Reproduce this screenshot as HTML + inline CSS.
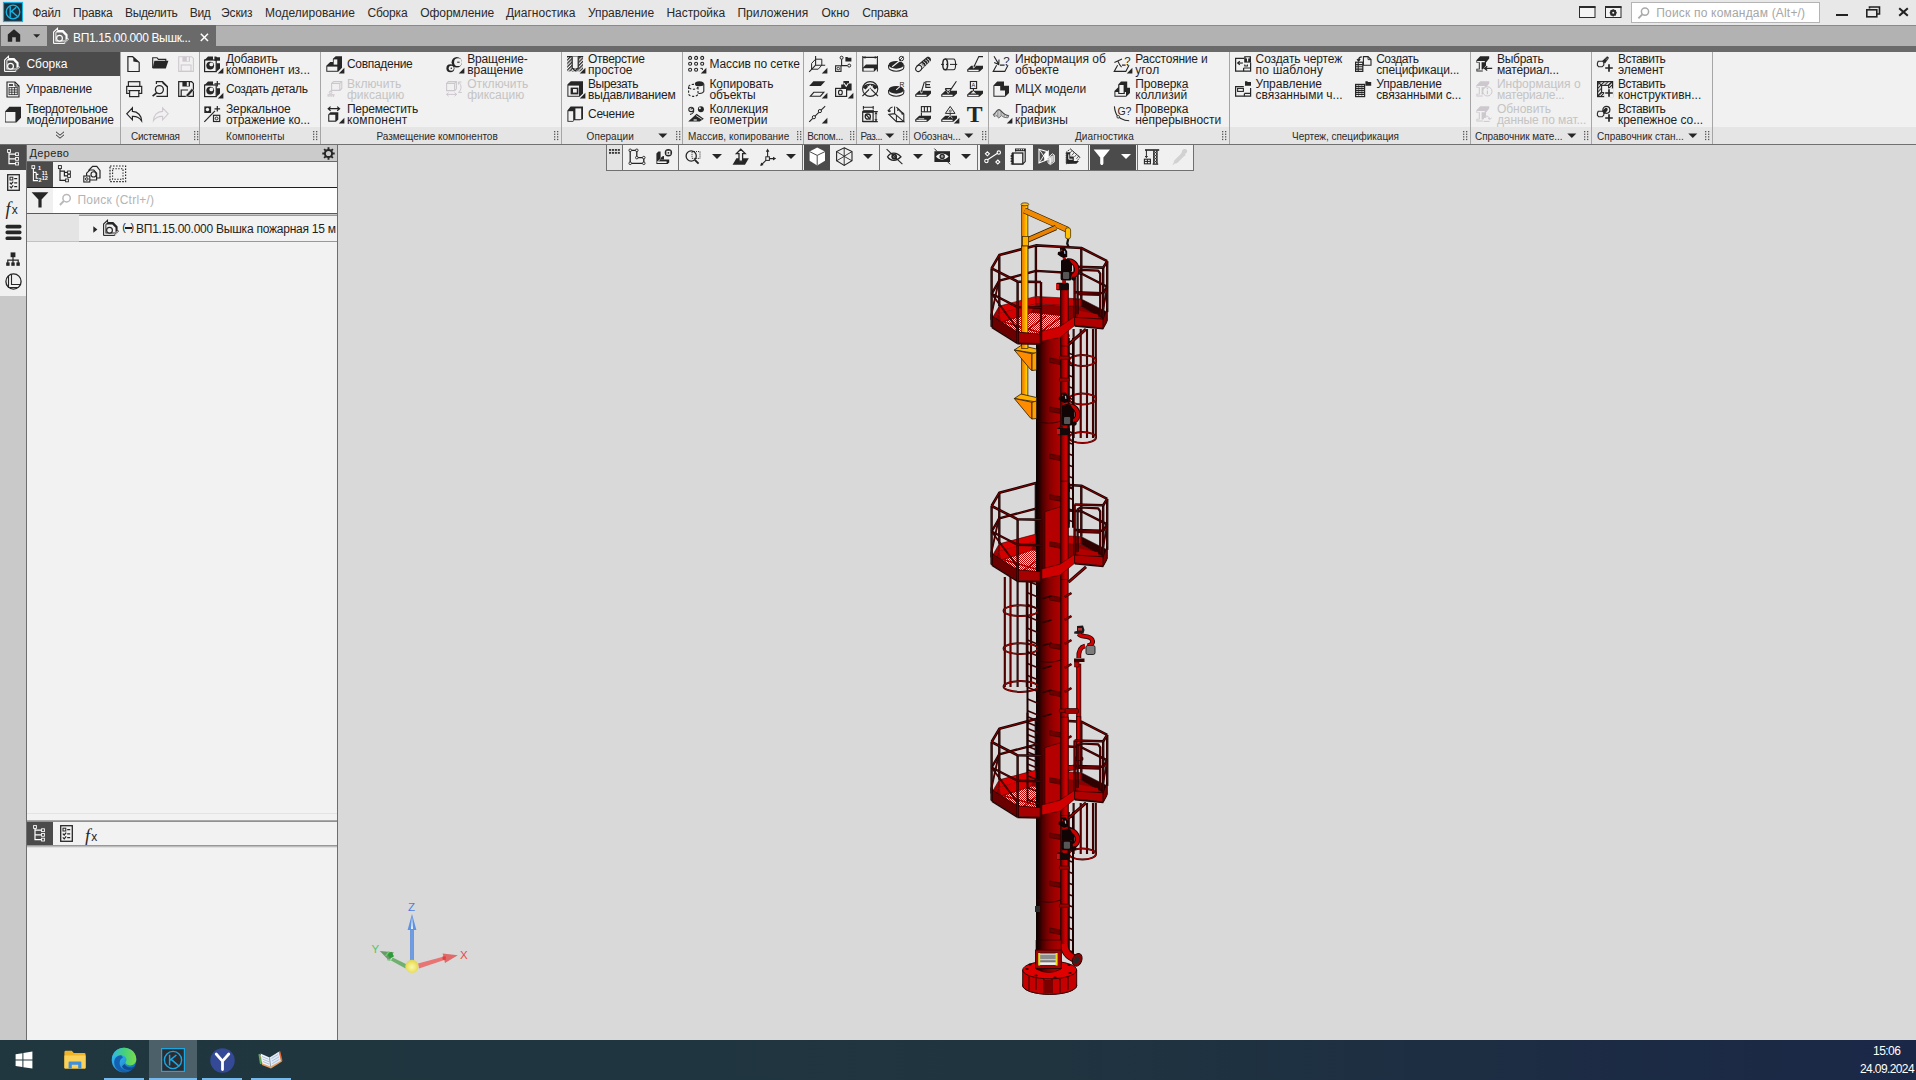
<!DOCTYPE html>
<html lang="ru"><head><meta charset="utf-8"><title>КОМПАС-3D</title><style>
html,body{margin:0;padding:0}
body{width:1916px;height:1080px;position:relative;overflow:hidden;background:#d9d9d9;font-family:"Liberation Sans",sans-serif;font-size:12px;color:#1a1a1a}
body>div,body>span,body>svg{position:absolute;display:block}
.t{white-space:pre}
svg{overflow:visible}
</style></head><body>
<div style="left:0px;top:0px;width:1916px;height:25px;background:#e8e8e8;"></div>
<div style="left:0px;top:25px;width:1916px;height:1px;background:#8a8a8a;"></div>
<svg style="left:3px;top:2px;" width="20" height="20" viewBox="0 0 20 20"><rect x="0" y="0" width="20" height="20" fill="#1d2f3a"/><rect x="0.5" y="0.5" width="19" height="19" fill="none" stroke="#18b4e6" stroke-width="1.2"/>
<circle cx="10" cy="10" r="6.8" fill="none" stroke="#18b4e6" stroke-width="1.3"/>
<path d="M7.2 4.2V15.6M7.4 10.2L13.2 5.2M8.6 9.3L15.4 15.2" fill="none" stroke="#18b4e6" stroke-width="1.4"/></svg>
<span class="t" style="left:32.2px;top:5.84px;font-size:12px;line-height:14px;color:#2a2a2a;letter-spacing:-0.275px;">Файл</span>
<span class="t" style="left:73px;top:5.84px;font-size:12px;line-height:14px;color:#2a2a2a;letter-spacing:-0.172px;">Правка</span>
<span class="t" style="left:125px;top:5.84px;font-size:12px;line-height:14px;color:#2a2a2a;letter-spacing:-0.357px;">Выделить</span>
<span class="t" style="left:189.8px;top:5.84px;font-size:12px;line-height:14px;color:#2a2a2a;letter-spacing:-0.403px;">Вид</span>
<span class="t" style="left:221px;top:5.84px;font-size:12px;line-height:14px;color:#2a2a2a;letter-spacing:-0.116px;">Эскиз</span>
<span class="t" style="left:264.9px;top:5.84px;font-size:12px;line-height:14px;color:#2a2a2a;letter-spacing:0.017px;">Моделирование</span>
<span class="t" style="left:367.4px;top:5.84px;font-size:12px;line-height:14px;color:#2a2a2a;letter-spacing:-0.179px;">Сборка</span>
<span class="t" style="left:420.2px;top:5.84px;font-size:12px;line-height:14px;color:#2a2a2a;letter-spacing:-0.048px;">Оформление</span>
<span class="t" style="left:506px;top:5.84px;font-size:12px;line-height:14px;color:#2a2a2a;letter-spacing:-0.006px;">Диагностика</span>
<span class="t" style="left:588px;top:5.84px;font-size:12px;line-height:14px;color:#2a2a2a;letter-spacing:-0.071px;">Управление</span>
<span class="t" style="left:666.5px;top:5.84px;font-size:12px;line-height:14px;color:#2a2a2a;letter-spacing:-0.064px;">Настройка</span>
<span class="t" style="left:737.4px;top:5.84px;font-size:12px;line-height:14px;color:#2a2a2a;letter-spacing:0.080px;">Приложения</span>
<span class="t" style="left:821.5px;top:5.84px;font-size:12px;line-height:14px;color:#2a2a2a;letter-spacing:0.029px;">Окно</span>
<span class="t" style="left:862.3px;top:5.84px;font-size:12px;line-height:14px;color:#2a2a2a;letter-spacing:-0.225px;">Справка</span>
<svg style="left:1579px;top:6px;" width="17" height="12" viewBox="0 0 17 12"><rect x="0.5" y="1" width="15.5" height="10.5" fill="#f4f4f4" stroke="#2b2b2b" stroke-width="1"/><rect x="0" y="0" width="16.5" height="2" fill="#2b2b2b"/></svg>
<svg style="left:1605px;top:6px;" width="17" height="12" viewBox="0 0 17 12"><rect x="0.5" y="1" width="15.5" height="10.5" fill="#f4f4f4" stroke="#2b2b2b" stroke-width="1"/><rect x="0" y="0" width="16.5" height="2" fill="#2b2b2b"/><circle cx="8.2" cy="6.8" r="2.3" fill="none" stroke="#2b2b2b" stroke-width="1.8"/><path d="M8.2 3.2v7.2M4.6 6.8h7.2M5.7 4.3l5 5M10.7 4.3l-5 5" stroke="#2b2b2b" stroke-width="1.1"/><circle cx="8.2" cy="6.8" r="1" fill="#f4f4f4"/></svg>
<div style="left:1631px;top:2px;width:189px;height:21px;background:#ffffff;border:1px solid #b4b4b4;box-sizing:border-box;"></div>
<svg style="left:1637px;top:6px;" width="14" height="14" viewBox="0 0 14 14"><circle cx="8" cy="5.6" r="3.6" fill="none" stroke="#a9a9a9" stroke-width="1.5"/><path d="M5.3 8.4L1.4 12.4" stroke="#a9a9a9" stroke-width="1.9"/></svg>
<span class="t" style="left:1656.3px;top:6.04px;font-size:12px;line-height:14px;color:#a6a6a6;letter-spacing:0.188px;">Поиск по командам (Alt+/)</span>
<div style="left:1836px;top:14px;width:12px;height:2px;background:#222;"></div>
<svg style="left:1866px;top:6px;" width="14" height="12" viewBox="0 0 14 12"><path d="M3.5 2.5V1h10v7h-2.5" fill="none" stroke="#222" stroke-width="1.6"/><rect x="0.8" y="3.8" width="10" height="7" fill="none" stroke="#222" stroke-width="1.6"/></svg>
<svg style="left:1898px;top:7px;" width="12" height="10" viewBox="0 0 12 10"><path d="M1.2 1.2L9.8 8.8M9.8 1.2L1.2 8.8" stroke="#222" stroke-width="2.1"/></svg>
<div style="left:0px;top:26px;width:1916px;height:20px;background:#b2b2b2;"></div>
<div style="left:0px;top:46px;width:1916px;height:6px;background:#6a6a6a;"></div>
<div style="left:0px;top:25px;width:216px;height:27px;background:#6a6a6a;"></div>
<div style="left:1px;top:26px;width:46px;height:20px;background:#b2b2b2;"></div>
<svg style="left:7px;top:29px;" width="14" height="13" viewBox="0 0 14 13"><path d="M7 0.200L0.800 5.400V12.800H5.200V8.200H8.800V12.800H13.200V5.400z" fill="#262626"/></svg>
<svg style="left:33px;top:33.6px;" width="8" height="4" viewBox="0 0 8 4"><path d="M0.2 0.2h7l-3.500 3.500z" fill="#262626"/></svg>
<svg style="left:53px;top:28px;" width="17" height="17" viewBox="0 0 17 17"><path d="M0.600 15.500V4.100L4.500 0.400V2.200" fill="none" stroke="#ffffff" stroke-width="1.100"/><path d="M0.600 15.400H11.600" stroke="#ffffff" stroke-width="1.100"/><path d="M11.400 15.400L15.800 10.400" stroke="#ffffff" stroke-width="1.200" stroke-dasharray="1 0.700"/>
<path d="M2.400 13.600V4.600L4.800 2.100H10.300L14.600 6.400V9.900L16 10.500L14.300 10.800L11.700 13.600z" fill="#ffffff"/><path d="M3.400 4.600H9.300L12.500 7.800V12.600H3.400z" fill="#6a6a6a"/>
<circle cx="6.500" cy="10.200" r="2.900" fill="#6a6a6a" stroke="#ffffff" stroke-width="1.200"/></svg>
<span class="t" style="left:73px;top:30.84px;font-size:12px;line-height:14px;color:#ffffff;letter-spacing:-0.350px;">ВП1.15.00.000 Вышк...</span>
<svg style="left:200px;top:33px;" width="9" height="9" viewBox="0 0 9 9"><path d="M0.8 0.8L8 8M8 0.8L0.8 8" stroke="#fff" stroke-width="1.5"/></svg>
<div style="left:0px;top:52px;width:1916px;height:75px;background:#f1f1f1;"></div>
<div style="left:0px;top:127px;width:1916px;height:17px;background:#e5e5e5;"></div>
<div style="left:0px;top:144px;width:1916px;height:1px;background:#707070;"></div>
<div style="left:0px;top:52px;width:120px;height:24.4px;background:#4b4b4b;"></div>
<svg style="left:4px;top:56px;" width="17" height="17" viewBox="0 0 17 17"><path d="M0.600 15.500V4.100L4.500 0.400V2.200" fill="none" stroke="#ffffff" stroke-width="1.100"/><path d="M0.600 15.400H11.600" stroke="#ffffff" stroke-width="1.100"/><path d="M11.400 15.400L15.800 10.400" stroke="#ffffff" stroke-width="1.200" stroke-dasharray="1 0.700"/>
<path d="M2.400 13.600V4.600L4.800 2.100H10.300L14.600 6.400V9.900L16 10.500L14.300 10.800L11.700 13.600z" fill="#ffffff"/><path d="M3.400 4.600H9.300L12.500 7.800V12.600H3.400z" fill="#4b4b4b"/>
<circle cx="6.500" cy="10.200" r="2.900" fill="#4b4b4b" stroke="#ffffff" stroke-width="1.200"/></svg>
<span class="t" style="left:26.4px;top:57.14px;font-size:12px;line-height:14px;color:#ffffff;letter-spacing:-0.012px;">Сборка</span>
<svg style="left:6px;top:80.5px;" width="14" height="17" viewBox="0 0 14 17"><path d="M1 1h8l4 4v11H1z" fill="#f1f1f1" stroke="#262626" stroke-width="1.100"/><path d="M9 1v4h4" fill="none" stroke="#262626" stroke-width="1"/>
<path d="M3 4h4" stroke="#262626" stroke-width="1.6"/><path d="M3 6.6h8.4M3 8.9h8.4M3 11.2h8.4M3 13.6h8.4M3 6.2v7.8M5.8 6.2v7.8M8.6 6.2v7.8M11.3 6.2v7.8" stroke="#262626" stroke-width="0.800"/></svg>
<span class="t" style="left:26px;top:82.14px;font-size:12px;line-height:14px;color:#1e1e1e;letter-spacing:-0.051px;">Управление</span>
<svg style="left:4px;top:105.5px;" width="18" height="17" viewBox="0 0 18 17"><path d="M1 5.4L5.4 0.8h11.6v11L12.4 16.4H1z" fill="#262626"/><rect x="1.6" y="6" width="9.8" height="9.6" fill="#f1f1f1"/></svg>
<span class="t" style="left:26px;top:102.14px;font-size:12px;line-height:14px;color:#1e1e1e;letter-spacing:-0.199px;">Твердотельное</span>
<span class="t" style="left:26.5px;top:113.14px;font-size:12px;line-height:14px;color:#1e1e1e;letter-spacing:-0.031px;">моделирование</span>
<svg style="left:55px;top:131px;" width="10" height="8" viewBox="0 0 10 8"><path d="M1 0.8L5 4.2L9 0.8M1 3.8L5 7.2L9 3.8" fill="none" stroke="#333" stroke-width="1"/></svg>
<div style="left:120px;top:52px;width:1px;height:92px;background:#a6a6a6;"></div>
<div style="left:199px;top:52px;width:1px;height:92px;background:#a6a6a6;"></div>
<div style="left:320px;top:52px;width:1px;height:92px;background:#a6a6a6;"></div>
<div style="left:561px;top:52px;width:1px;height:92px;background:#a6a6a6;"></div>
<div style="left:682px;top:52px;width:1px;height:92px;background:#a6a6a6;"></div>
<div style="left:803px;top:52px;width:1px;height:92px;background:#a6a6a6;"></div>
<div style="left:856px;top:52px;width:1px;height:92px;background:#a6a6a6;"></div>
<div style="left:909px;top:52px;width:1px;height:92px;background:#a6a6a6;"></div>
<div style="left:988px;top:52px;width:1px;height:92px;background:#a6a6a6;"></div>
<div style="left:1229px;top:52px;width:1px;height:92px;background:#a6a6a6;"></div>
<div style="left:1470px;top:52px;width:1px;height:92px;background:#a6a6a6;"></div>
<div style="left:1591px;top:52px;width:1px;height:92px;background:#a6a6a6;"></div>
<div style="left:1712px;top:52px;width:1px;height:92px;background:#a6a6a6;"></div>
<span class="t" style="left:131px;top:130.84px;font-size:10px;line-height:12px;color:#2a2a2a;letter-spacing:-0.279px;">Системная</span>
<svg style="left:194px;top:131px;" width="5" height="10" viewBox="0 0 5 10"><rect x="0" y="0" width="1.3" height="1.3" fill="#555"/><rect x="0" y="2.6" width="1.3" height="1.3" fill="#555"/><rect x="0" y="5.2" width="1.3" height="1.3" fill="#555"/><rect x="0" y="7.8" width="1.3" height="1.3" fill="#555"/><rect x="3" y="0" width="1.3" height="1.3" fill="#555"/><rect x="3" y="2.6" width="1.3" height="1.3" fill="#555"/><rect x="3" y="5.2" width="1.3" height="1.3" fill="#555"/><rect x="3" y="7.8" width="1.3" height="1.3" fill="#555"/></svg>
<span class="t" style="left:226px;top:130.84px;font-size:10px;line-height:12px;color:#2a2a2a;letter-spacing:0.079px;">Компоненты</span>
<svg style="left:313px;top:131px;" width="5" height="10" viewBox="0 0 5 10"><rect x="0" y="0" width="1.3" height="1.3" fill="#555"/><rect x="0" y="2.6" width="1.3" height="1.3" fill="#555"/><rect x="0" y="5.2" width="1.3" height="1.3" fill="#555"/><rect x="0" y="7.8" width="1.3" height="1.3" fill="#555"/><rect x="3" y="0" width="1.3" height="1.3" fill="#555"/><rect x="3" y="2.6" width="1.3" height="1.3" fill="#555"/><rect x="3" y="5.2" width="1.3" height="1.3" fill="#555"/><rect x="3" y="7.8" width="1.3" height="1.3" fill="#555"/></svg>
<span class="t" style="left:376.4px;top:130.84px;font-size:10px;line-height:12px;color:#2a2a2a;letter-spacing:-0.022px;">Размещение компонентов</span>
<svg style="left:554px;top:131px;" width="5" height="10" viewBox="0 0 5 10"><rect x="0" y="0" width="1.3" height="1.3" fill="#555"/><rect x="0" y="2.6" width="1.3" height="1.3" fill="#555"/><rect x="0" y="5.2" width="1.3" height="1.3" fill="#555"/><rect x="0" y="7.8" width="1.3" height="1.3" fill="#555"/><rect x="3" y="0" width="1.3" height="1.3" fill="#555"/><rect x="3" y="2.6" width="1.3" height="1.3" fill="#555"/><rect x="3" y="5.2" width="1.3" height="1.3" fill="#555"/><rect x="3" y="7.8" width="1.3" height="1.3" fill="#555"/></svg>
<span class="t" style="left:586.6px;top:130.84px;font-size:10px;line-height:12px;color:#2a2a2a;letter-spacing:0.053px;">Операции</span>
<svg style="left:675.5px;top:131px;" width="5" height="10" viewBox="0 0 5 10"><rect x="0" y="0" width="1.3" height="1.3" fill="#555"/><rect x="0" y="2.6" width="1.3" height="1.3" fill="#555"/><rect x="0" y="5.2" width="1.3" height="1.3" fill="#555"/><rect x="0" y="7.8" width="1.3" height="1.3" fill="#555"/><rect x="3" y="0" width="1.3" height="1.3" fill="#555"/><rect x="3" y="2.6" width="1.3" height="1.3" fill="#555"/><rect x="3" y="5.2" width="1.3" height="1.3" fill="#555"/><rect x="3" y="7.8" width="1.3" height="1.3" fill="#555"/></svg>
<span class="t" style="left:688px;top:130.84px;font-size:10px;line-height:12px;color:#2a2a2a;letter-spacing:0.071px;">Массив, копирование</span>
<svg style="left:796.5px;top:131px;" width="5" height="10" viewBox="0 0 5 10"><rect x="0" y="0" width="1.3" height="1.3" fill="#555"/><rect x="0" y="2.6" width="1.3" height="1.3" fill="#555"/><rect x="0" y="5.2" width="1.3" height="1.3" fill="#555"/><rect x="0" y="7.8" width="1.3" height="1.3" fill="#555"/><rect x="3" y="0" width="1.3" height="1.3" fill="#555"/><rect x="3" y="2.6" width="1.3" height="1.3" fill="#555"/><rect x="3" y="5.2" width="1.3" height="1.3" fill="#555"/><rect x="3" y="7.8" width="1.3" height="1.3" fill="#555"/></svg>
<span class="t" style="left:807.2px;top:130.84px;font-size:10px;line-height:12px;color:#2a2a2a;letter-spacing:-0.257px;">Вспом...</span>
<svg style="left:849.5px;top:131px;" width="5" height="10" viewBox="0 0 5 10"><rect x="0" y="0" width="1.3" height="1.3" fill="#555"/><rect x="0" y="2.6" width="1.3" height="1.3" fill="#555"/><rect x="0" y="5.2" width="1.3" height="1.3" fill="#555"/><rect x="0" y="7.8" width="1.3" height="1.3" fill="#555"/><rect x="3" y="0" width="1.3" height="1.3" fill="#555"/><rect x="3" y="2.6" width="1.3" height="1.3" fill="#555"/><rect x="3" y="5.2" width="1.3" height="1.3" fill="#555"/><rect x="3" y="7.8" width="1.3" height="1.3" fill="#555"/></svg>
<span class="t" style="left:860.6px;top:130.84px;font-size:10px;line-height:12px;color:#2a2a2a;letter-spacing:-0.568px;">Раз...</span>
<svg style="left:903px;top:131px;" width="5" height="10" viewBox="0 0 5 10"><rect x="0" y="0" width="1.3" height="1.3" fill="#555"/><rect x="0" y="2.6" width="1.3" height="1.3" fill="#555"/><rect x="0" y="5.2" width="1.3" height="1.3" fill="#555"/><rect x="0" y="7.8" width="1.3" height="1.3" fill="#555"/><rect x="3" y="0" width="1.3" height="1.3" fill="#555"/><rect x="3" y="2.6" width="1.3" height="1.3" fill="#555"/><rect x="3" y="5.2" width="1.3" height="1.3" fill="#555"/><rect x="3" y="7.8" width="1.3" height="1.3" fill="#555"/></svg>
<span class="t" style="left:913.5px;top:130.84px;font-size:10px;line-height:12px;color:#2a2a2a;letter-spacing:-0.085px;">Обознач...</span>
<svg style="left:981.5px;top:131px;" width="5" height="10" viewBox="0 0 5 10"><rect x="0" y="0" width="1.3" height="1.3" fill="#555"/><rect x="0" y="2.6" width="1.3" height="1.3" fill="#555"/><rect x="0" y="5.2" width="1.3" height="1.3" fill="#555"/><rect x="0" y="7.8" width="1.3" height="1.3" fill="#555"/><rect x="3" y="0" width="1.3" height="1.3" fill="#555"/><rect x="3" y="2.6" width="1.3" height="1.3" fill="#555"/><rect x="3" y="5.2" width="1.3" height="1.3" fill="#555"/><rect x="3" y="7.8" width="1.3" height="1.3" fill="#555"/></svg>
<span class="t" style="left:1075px;top:130.84px;font-size:10px;line-height:12px;color:#2a2a2a;letter-spacing:0.075px;">Диагностика</span>
<svg style="left:1222px;top:131px;" width="5" height="10" viewBox="0 0 5 10"><rect x="0" y="0" width="1.3" height="1.3" fill="#555"/><rect x="0" y="2.6" width="1.3" height="1.3" fill="#555"/><rect x="0" y="5.2" width="1.3" height="1.3" fill="#555"/><rect x="0" y="7.8" width="1.3" height="1.3" fill="#555"/><rect x="3" y="0" width="1.3" height="1.3" fill="#555"/><rect x="3" y="2.6" width="1.3" height="1.3" fill="#555"/><rect x="3" y="5.2" width="1.3" height="1.3" fill="#555"/><rect x="3" y="7.8" width="1.3" height="1.3" fill="#555"/></svg>
<span class="t" style="left:1292px;top:130.84px;font-size:10px;line-height:12px;color:#2a2a2a;letter-spacing:-0.036px;">Чертеж, спецификация</span>
<svg style="left:1463px;top:131px;" width="5" height="10" viewBox="0 0 5 10"><rect x="0" y="0" width="1.3" height="1.3" fill="#555"/><rect x="0" y="2.6" width="1.3" height="1.3" fill="#555"/><rect x="0" y="5.2" width="1.3" height="1.3" fill="#555"/><rect x="0" y="7.8" width="1.3" height="1.3" fill="#555"/><rect x="3" y="0" width="1.3" height="1.3" fill="#555"/><rect x="3" y="2.6" width="1.3" height="1.3" fill="#555"/><rect x="3" y="5.2" width="1.3" height="1.3" fill="#555"/><rect x="3" y="7.8" width="1.3" height="1.3" fill="#555"/></svg>
<span class="t" style="left:1475px;top:130.84px;font-size:10px;line-height:12px;color:#2a2a2a;letter-spacing:-0.047px;">Справочник мате...</span>
<svg style="left:1584px;top:131px;" width="5" height="10" viewBox="0 0 5 10"><rect x="0" y="0" width="1.3" height="1.3" fill="#555"/><rect x="0" y="2.6" width="1.3" height="1.3" fill="#555"/><rect x="0" y="5.2" width="1.3" height="1.3" fill="#555"/><rect x="0" y="7.8" width="1.3" height="1.3" fill="#555"/><rect x="3" y="0" width="1.3" height="1.3" fill="#555"/><rect x="3" y="2.6" width="1.3" height="1.3" fill="#555"/><rect x="3" y="5.2" width="1.3" height="1.3" fill="#555"/><rect x="3" y="7.8" width="1.3" height="1.3" fill="#555"/></svg>
<span class="t" style="left:1597px;top:130.84px;font-size:10px;line-height:12px;color:#2a2a2a;letter-spacing:0.014px;">Справочник стан...</span>
<svg style="left:1705px;top:131px;" width="5" height="10" viewBox="0 0 5 10"><rect x="0" y="0" width="1.3" height="1.3" fill="#555"/><rect x="0" y="2.6" width="1.3" height="1.3" fill="#555"/><rect x="0" y="5.2" width="1.3" height="1.3" fill="#555"/><rect x="0" y="7.8" width="1.3" height="1.3" fill="#555"/><rect x="3" y="0" width="1.3" height="1.3" fill="#555"/><rect x="3" y="2.6" width="1.3" height="1.3" fill="#555"/><rect x="3" y="5.2" width="1.3" height="1.3" fill="#555"/><rect x="3" y="7.8" width="1.3" height="1.3" fill="#555"/></svg>
<svg style="left:658px;top:133px;" width="10" height="6" viewBox="0 0 10 6"><path d="M0.3 0.5h9l-4.5 4.6z" fill="#262626"/></svg>
<svg style="left:885px;top:133px;" width="10" height="6" viewBox="0 0 10 6"><path d="M0.3 0.5h9l-4.5 4.6z" fill="#262626"/></svg>
<svg style="left:963.8px;top:133px;" width="10" height="6" viewBox="0 0 10 6"><path d="M0.3 0.5h9l-4.5 4.6z" fill="#262626"/></svg>
<svg style="left:1566.6px;top:133px;" width="10" height="6" viewBox="0 0 10 6"><path d="M0.3 0.5h9l-4.5 4.6z" fill="#262626"/></svg>
<svg style="left:1688px;top:133px;" width="10" height="6" viewBox="0 0 10 6"><path d="M0.3 0.5h9l-4.5 4.6z" fill="#262626"/></svg>
<svg style="left:126.3px;top:56.2px;" width="16" height="17" viewBox="0 0 16 17"><path d="M1.900 0.700H6.600L13.200 6.400V15.500H1.900z" fill="#f1f1f1" stroke="#262626" stroke-width="1.200" stroke-linejoin="miter"/><path d="M7.300 0.700V5.600L13.200 6.400z" fill="#262626"/></svg>
<svg style="left:152px;top:56.2px;" width="17" height="17" viewBox="0 0 17 17"><path d="M0.700 12V1.700H5L6.400 3.400H13.800V5.200" fill="none" stroke="#262626" stroke-width="1.100"/><path d="M0.600 12.400L2.400 4.800H16.400L13.800 12.400z" fill="#262626"/></svg>
<svg style="left:178px;top:56.2px;" width="16" height="17" viewBox="0 0 16 17"><path d="M0.700 0.700H13.600L15.400 2.400V15.400H0.700z" fill="none" stroke="#cfc9cf" stroke-width="1.100"/><rect x="4.400" y="0.700" width="7.600" height="5" fill="#cfc9cf"/><rect x="8.800" y="1.200" width="2" height="4" fill="#f1f1f1"/><rect x="3.200" y="9" width="9.800" height="6.400" fill="none" stroke="#cfc9cf" stroke-width="1.100"/></svg>
<svg style="left:126.3px;top:81.2px;" width="17" height="17" viewBox="0 0 17 17"><rect x="2.400" y="0.700" width="11.400" height="5" fill="#f1f1f1" stroke="#262626" stroke-width="1.200"/><rect x="0.700" y="5.400" width="15" height="7" fill="#f1f1f1" stroke="#262626" stroke-width="1.200"/><path d="M2.400 9.600H14" stroke="#262626" stroke-width="1.200"/><rect x="3.600" y="9.600" width="9.200" height="6" fill="#f1f1f1" stroke="#262626" stroke-width="1.200"/></svg>
<svg style="left:152px;top:81.2px;" width="17" height="17" viewBox="0 0 17 17"><path d="M4.400 15.400H15.400V5.600L10.600 0.700H4.400V3" fill="none" stroke="#262626" stroke-width="1.200"/><path d="M10.600 0.700L15.400 5.600V6.800L10 2z" fill="#262626"/><circle cx="7.400" cy="8.600" r="4" fill="#f1f1f1" stroke="#262626" stroke-width="1.300"/><path d="M4.600 11.800L0.600 15.200" stroke="#262626" stroke-width="1.700"/></svg>
<svg style="left:178px;top:81.2px;" width="17" height="17" viewBox="0 0 17 17"><path d="M0.700 0.700H13.600L15.400 2.400V15.400H0.700z" fill="#f1f1f1" stroke="#262626" stroke-width="1.200"/><rect x="4.400" y="0.700" width="7.600" height="4.800" fill="#262626"/><rect x="8.800" y="1.100" width="1.900" height="3.800" fill="#f1f1f1"/><path d="M3.200 15.400V9H10" fill="none" stroke="#262626" stroke-width="1.200"/><path d="M8.400 13.600L13.800 7.400L15.800 9.200L10.400 15.200L8 15.800z" fill="#262626" stroke="#f1f1f1" stroke-width="0.500"/></svg>
<svg style="left:126.3px;top:107.0px;" width="17" height="15" viewBox="0 0 17 15"><path d="M6.400 0.800L0.800 6.800L6.400 12.800V9.400C10.400 9.200 13.400 10.400 15.600 13.800C15.400 8.600 12 4.600 6.400 4.400z" fill="#f1f1f1" stroke="#262626" stroke-width="1.200" stroke-linejoin="miter"/></svg>
<svg style="left:152px;top:107.0px;" width="17" height="15" viewBox="0 0 17 15"><path d="M10.600 0.800L16.200 6.800L10.600 12.800V9.400C6.600 9.200 3.600 10.400 1.400 13.800C1.600 8.600 5 4.600 10.600 4.400z" fill="#f1f1f1" stroke="#cfc9cf" stroke-width="1.100" stroke-linejoin="miter"/></svg>
<svg style="left:204.4px;top:56.2px;" width="17" height="17" viewBox="0 0 17 17"><path d="M0.600 4L4 0.400H9V4z" fill="#262626"/><path d="M12.200 7.300H16V12.400L12.200 16z" fill="#262626"/><rect x="0.600" y="4" width="11.600" height="11.600" fill="#f1f1f1" stroke="#262626" stroke-width="1.200"/><circle cx="6.200" cy="9.600" r="3.900" fill="#262626"/><circle cx="7.300" cy="8.400" r="1.900" fill="#f1f1f1"/><path d="M10.400 0.400h1.800l0.800 0.800h3v3.600H10.400z" fill="#262626"/></svg>
<svg style="left:216.7px;top:66.7px" width="7" height="7" viewBox="0 0 7 7"><path d="M7 -1V7H-1z" fill="#f1f1f1"/><path d="M6.400 0.800V6.400H0.800z" fill="#262626"/></svg>
<span class="t" style="left:226px;top:52.14px;font-size:12px;line-height:14px;color:#1e1e1e;letter-spacing:-0.191px;">Добавить</span>
<span class="t" style="left:226px;top:63.14px;font-size:12px;line-height:14px;color:#1e1e1e;letter-spacing:-0.029px;">компонент из...</span>
<svg style="left:204.4px;top:81.2px;" width="17" height="17" viewBox="0 0 17 17"><path d="M0.600 4L4 0.400H9V4z" fill="#262626"/><path d="M12.200 7.300H16V12.400L12.200 16z" fill="#262626"/><rect x="0.600" y="4" width="11.600" height="11.600" fill="#f1f1f1" stroke="#262626" stroke-width="1.200"/><circle cx="6.200" cy="9.600" r="3.900" fill="#262626"/><circle cx="7.300" cy="8.400" r="1.900" fill="#f1f1f1"/><path d="M13.300 0v5.600M10.500 2.800h5.600" stroke="#262626" stroke-width="1.200"/></svg>
<svg style="left:216.7px;top:91.7px" width="7" height="7" viewBox="0 0 7 7"><path d="M7 -1V7H-1z" fill="#f1f1f1"/><path d="M6.400 0.800V6.400H0.800z" fill="#262626"/></svg>
<span class="t" style="left:226px;top:82.14px;font-size:12px;line-height:14px;color:#1e1e1e;letter-spacing:-0.428px;">Создать деталь</span>
<svg style="left:204.4px;top:106.2px;" width="17" height="17" viewBox="0 0 17 17"><rect x="0.300" y="0.400" width="6.800" height="6.600" fill="#262626"/><circle cx="3.500" cy="3.500" r="1.700" fill="#f1f1f1"/><path d="M0.300 15.800L11 4.800" stroke="#262626" stroke-width="1.200"/><path d="M13.300 0v5.600M10.500 2.800h5.600" stroke="#262626" stroke-width="1.200"/><rect x="9.500" y="9.300" width="6.200" height="6.200" fill="#f1f1f1" stroke="#262626" stroke-width="1.200"/><circle cx="12.600" cy="12.400" r="1.400" fill="none" stroke="#262626" stroke-width="1"/></svg>
<span class="t" style="left:226px;top:102.14px;font-size:12px;line-height:14px;color:#1e1e1e;letter-spacing:-0.141px;">Зеркальное</span>
<span class="t" style="left:226px;top:113.14px;font-size:12px;line-height:14px;color:#1e1e1e;letter-spacing:-0.090px;">отражение ко...</span>
<svg style="left:326.0px;top:56.2px;" width="17" height="17" viewBox="0 0 17 17"><path d="M0.300 9.700L4.200 5.900H6.900V2.800L9.700 0.200H16V11.800L12.200 15.800H0.300z" fill="#262626"/><rect x="1.300" y="10.600" width="10" height="4.200" fill="#f1f1f1"/><rect x="7.700" y="3.400" width="3.600" height="5.200" fill="#f1f1f1"/></svg>
<svg style="left:338.3px;top:66.7px" width="7" height="7" viewBox="0 0 7 7"><path d="M7 -1V7H-1z" fill="#f1f1f1"/><path d="M6.400 0.800V6.400H0.800z" fill="#262626"/></svg>
<span class="t" style="left:346.9px;top:57.14px;font-size:12px;line-height:14px;color:#1e1e1e;letter-spacing:-0.296px;">Совпадение</span>
<svg style="left:326.0px;top:81.2px;" width="17" height="17" viewBox="0 0 17 17"><path d="M5.600 9.400V2.400L7.600 0.500H15.800V7.400L13.800 9.400z" fill="none" stroke="#cdc8cd" stroke-width="1.100"/><path d="M5.600 2.400H13.800V9.400M13.800 2.400L15.800 0.500" fill="none" stroke="#cdc8cd" stroke-width="1.100"/><path d="M5.600 9.400L4.400 11.200" stroke="#cdc8cd" stroke-width="1.100"/><circle cx="4.600" cy="11.400" r="1.300" fill="none" stroke="#cdc8cd" stroke-width="1"/><path d="M1.400 13.800H8.600" stroke="#cdc8cd" stroke-width="1.200"/><path d="M2.200 14v2M4 14v2M5.800 14v2M7.600 14v2" stroke="#cdc8cd" stroke-width="0.900"/></svg>
<span class="t" style="left:346.9px;top:77.14px;font-size:12px;line-height:14px;color:#c4c4c4;letter-spacing:0.072px;">Включить</span>
<span class="t" style="left:346.9px;top:88.14px;font-size:12px;line-height:14px;color:#c4c4c4;letter-spacing:0.036px;">фиксацию</span>
<svg style="left:326.0px;top:106.2px;" width="17" height="17" viewBox="0 0 17 17"><path d="M2.200 2.700H13.600M4.600 0.600L2.200 2.700L4.600 4.800M11.200 0.600L13.600 2.700L11.200 4.800" fill="none" stroke="#262626" stroke-width="1.200"/><path d="M2.200 8.400L4.400 6.200H12.300V13.600L10 15.800H2.200z" fill="#262626"/><rect x="3.300" y="8.800" width="6" height="5.800" fill="#f1f1f1"/></svg>
<svg style="left:338.3px;top:116.7px" width="7" height="7" viewBox="0 0 7 7"><path d="M7 -1V7H-1z" fill="#f1f1f1"/><path d="M6.400 0.800V6.400H0.800z" fill="#262626"/></svg>
<span class="t" style="left:346.9px;top:102.14px;font-size:12px;line-height:14px;color:#1e1e1e;letter-spacing:-0.228px;">Переместить</span>
<span class="t" style="left:346.9px;top:113.14px;font-size:12px;line-height:14px;color:#1e1e1e;letter-spacing:0.189px;">компонент</span>
<svg style="left:446.0px;top:56.2px;" width="17" height="17" viewBox="0 0 17 17"><circle cx="10.800" cy="6.200" r="5.200" fill="#262626"/><circle cx="12" cy="6.200" r="3.900" fill="#f1f1f1"/><path d="M11.200 6.200h2.400" stroke="#262626" stroke-width="1.100"/><circle cx="4.400" cy="12.200" r="4" fill="#262626"/><circle cx="5.200" cy="12.200" r="2.500" fill="#f1f1f1"/><circle cx="5.300" cy="12.200" r="0.800" fill="#262626"/></svg>
<svg style="left:458.3px;top:66.7px" width="7" height="7" viewBox="0 0 7 7"><path d="M7 -1V7H-1z" fill="#f1f1f1"/><path d="M6.400 0.800V6.400H0.800z" fill="#262626"/></svg>
<span class="t" style="left:467.2px;top:52.14px;font-size:12px;line-height:14px;color:#1e1e1e;letter-spacing:-0.140px;">Вращение-</span>
<span class="t" style="left:467.2px;top:63.14px;font-size:12px;line-height:14px;color:#1e1e1e;letter-spacing:-0.029px;">вращение</span>
<svg style="left:446.0px;top:81.2px;" width="17" height="17" viewBox="0 0 17 17"><path d="M0.600 9.600V2.400L2.400 0.600H10.400V7.800L8.600 9.600z" fill="none" stroke="#cdc8cd" stroke-width="1.100"/><path d="M0.600 2.400H8.600V9.600M8.600 2.400L10.400 0.600" fill="none" stroke="#cdc8cd" stroke-width="1.100"/><path d="M12.600 1C15.800 4 15.800 8.400 12.600 11.400M12.400 1h3M12.400 1v2.600M12.400 11.400h3.400" fill="none" stroke="#cdc8cd" stroke-width="1"/><path d="M0.600 13.400H10.600M2.600 11.600L0.600 13.400L2.600 15.200M8.600 11.600L10.600 13.400L8.600 15.200" fill="none" stroke="#cdc8cd" stroke-width="1"/></svg>
<span class="t" style="left:467.2px;top:77.14px;font-size:12px;line-height:14px;color:#c4c4c4;letter-spacing:0.061px;">Отключить</span>
<span class="t" style="left:467.2px;top:88.14px;font-size:12px;line-height:14px;color:#c4c4c4;letter-spacing:-0.014px;">фиксацию</span>
<svg style="left:566.9px;top:56.2px;" width="17" height="17" viewBox="0 0 17 17"><defs><pattern id="hh" width="2.400" height="2.400" patternUnits="userSpaceOnUse" patternTransform="rotate(-45)"><rect width="2.400" height="1.300" fill="#333"/></pattern></defs><rect x="0.200" y="0.800" width="4.800" height="14.600" fill="url(#hh)"/><rect x="11.200" y="0.800" width="4.800" height="14.600" fill="url(#hh)"/><path d="M4.600 13.400L8 15.800L11.600 13.400V15.600H4.600z" fill="url(#hh)"/><path d="M0 0.600H16.200" stroke="#262626" stroke-width="1.200"/><path d="M5.200 0.600V12.200L8.200 15L11.200 12.200V0.600" fill="#f1f1f1" stroke="#262626" stroke-width="1.200"/><path d="M5.200 12.200Q8.200 14 11.200 12.200" fill="none" stroke="#262626" stroke-width="0.900"/></svg>
<svg style="left:579.2px;top:66.7px" width="7" height="7" viewBox="0 0 7 7"><path d="M7 -1V7H-1z" fill="#f1f1f1"/><path d="M6.400 0.800V6.400H0.800z" fill="#262626"/></svg>
<span class="t" style="left:588px;top:52.14px;font-size:12px;line-height:14px;color:#1e1e1e;letter-spacing:-0.299px;">Отверстие</span>
<span class="t" style="left:588px;top:63.14px;font-size:12px;line-height:14px;color:#1e1e1e;letter-spacing:-0.007px;">простое</span>
<svg style="left:566.9px;top:81.2px;" width="17" height="17" viewBox="0 0 17 17"><path d="M0.400 3.600L3.800 0.300H16V12.400L12.600 15.800H0.400z" fill="#262626"/><rect x="1.400" y="4.600" width="10.600" height="10.200" fill="#f1f1f1"/><rect x="3.600" y="6.600" width="7.800" height="6.800" fill="#262626"/><rect x="6" y="8" width="3.800" height="3.600" fill="#f1f1f1"/></svg>
<svg style="left:579.2px;top:91.7px" width="7" height="7" viewBox="0 0 7 7"><path d="M7 -1V7H-1z" fill="#f1f1f1"/><path d="M6.400 0.800V6.400H0.800z" fill="#262626"/></svg>
<span class="t" style="left:588px;top:77.14px;font-size:12px;line-height:14px;color:#1e1e1e;letter-spacing:-0.421px;">Вырезать</span>
<span class="t" style="left:588px;top:88.14px;font-size:12px;line-height:14px;color:#1e1e1e;letter-spacing:-0.157px;">выдавливанием</span>
<svg style="left:566.9px;top:106.2px;" width="17" height="17" viewBox="0 0 17 17"><path d="M0.400 4.400L3.600 0.600H16V13.200L12.800 14.200H7L6.200 15.800H0.400z" fill="#262626"/><rect x="1.400" y="5.200" width="4.800" height="9.700" fill="#f1f1f1"/><rect x="8.400" y="2.400" width="5.800" height="10.800" fill="#f1f1f1"/></svg>
<span class="t" style="left:588px;top:107.14px;font-size:12px;line-height:14px;color:#1e1e1e;letter-spacing:-0.210px;">Сечение</span>
<svg style="left:687.9px;top:56.2px;" width="17" height="17" viewBox="0 0 17 17"><circle cx="2.1" cy="1.9" r="1.500" fill="none" stroke="#262626" stroke-width="1.100"/><circle cx="8.1" cy="1.9" r="1.500" fill="none" stroke="#262626" stroke-width="1.100"/><circle cx="14.2" cy="1.9" r="1.500" fill="none" stroke="#262626" stroke-width="1.100"/><circle cx="2.1" cy="7.8" r="1.500" fill="none" stroke="#262626" stroke-width="1.100"/><circle cx="8.1" cy="7.8" r="1.500" fill="none" stroke="#262626" stroke-width="1.100"/><circle cx="14.2" cy="7.8" r="1.500" fill="none" stroke="#262626" stroke-width="1.100"/><circle cx="2.1" cy="13.7" r="1.500" fill="none" stroke="#262626" stroke-width="1.100"/><circle cx="8.1" cy="13.7" r="1.500" fill="none" stroke="#262626" stroke-width="1.100"/><path d="M12.400 12.400h2v1.600" fill="none" stroke="#262626" stroke-width="1"/></svg>
<svg style="left:700.2px;top:66.7px" width="7" height="7" viewBox="0 0 7 7"><path d="M7 -1V7H-1z" fill="#f1f1f1"/><path d="M6.400 0.800V6.400H0.800z" fill="#262626"/></svg>
<span class="t" style="left:709.4px;top:57.14px;font-size:12px;line-height:14px;color:#1e1e1e;letter-spacing:-0.077px;">Массив по сетке</span>
<svg style="left:687.9px;top:81.2px;" width="17" height="17" viewBox="0 0 17 17"><path d="M0.600 5.800V12.800A4.700 2.600 0 0 0 10 12.800V5.800" fill="none" stroke="#262626" stroke-width="1.100" stroke-dasharray="2.200 1.600"/><ellipse cx="5.300" cy="5.800" rx="4.700" ry="2.400" fill="none" stroke="#262626" stroke-width="1.100" stroke-dasharray="2.200 1.600"/><path d="M15.800 2.800V10.400C15.200 12 12.400 12.600 10.400 12.400" fill="none" stroke="#262626" stroke-width="1.100"/><ellipse cx="11.400" cy="2.800" rx="4.500" ry="2.500" fill="#262626"/></svg>
<span class="t" style="left:709.4px;top:77.14px;font-size:12px;line-height:14px;color:#1e1e1e;letter-spacing:-0.051px;">Копировать</span>
<span class="t" style="left:709.4px;top:88.14px;font-size:12px;line-height:14px;color:#1e1e1e;letter-spacing:-0.090px;">объекты</span>
<svg style="left:687.9px;top:106.2px;" width="17" height="17" viewBox="0 0 17 17"><path d="M5.800 3.400C5.800 0.600 0.800 0.600 0.800 3.600C0.800 6.400 5.600 6.200 5.600 3.800C5.600 2.200 3 2.200 3 3.600M5.600 3.800C6.200 6 4.600 8 2 8.400" fill="none" stroke="#262626" stroke-width="1.100"/><circle cx="12.900" cy="3.200" r="3" fill="#262626"/><circle cx="11.900" cy="2.200" r="1" fill="#f1f1f1"/><path d="M0.200 15.600L8.600 7.800L15.800 12.800L11.800 15.600z" fill="#262626"/><path d="M8.200 9.600L13.800 13.200" stroke="#f1f1f1" stroke-width="0.900"/><path d="M5.600 14h3.200" stroke="#f1f1f1" stroke-width="1.200"/></svg>
<span class="t" style="left:709.4px;top:102.14px;font-size:12px;line-height:14px;color:#1e1e1e;letter-spacing:-0.078px;">Коллекция</span>
<span class="t" style="left:709.4px;top:113.14px;font-size:12px;line-height:14px;color:#1e1e1e;letter-spacing:0.060px;">геометрии</span>
<svg style="left:808.9px;top:56.2px;" width="17" height="17" viewBox="0 0 17 17"><path d="M6.600 0V9.200H16.200M6.600 9.200L0.200 15.800" fill="none" stroke="#262626" stroke-width="1.100"/><path d="M6.600 3.200H12.800V9.200M6.600 3.200L2.600 7.400V13.400M12.800 9.200L9.200 13.200H2.800" fill="none" stroke="#262626" stroke-width="1"/></svg>
<svg style="left:821.2px;top:66.7px" width="7" height="7" viewBox="0 0 7 7"><path d="M7 -1V7H-1z" fill="#f1f1f1"/><path d="M6.400 0.800V6.400H0.800z" fill="#262626"/></svg>
<svg style="left:834.8px;top:56.2px;" width="17" height="17" viewBox="0 0 17 17"><path d="M6.600 2.600V9.600H12.600" fill="none" stroke="#262626" stroke-width="1.100"/><circle cx="6.600" cy="1.700" r="1.500" fill="#f1f1f1" stroke="#262626" stroke-width="1"/><circle cx="14.200" cy="9.600" r="1.500" fill="#f1f1f1" stroke="#262626" stroke-width="1"/><path d="M10.400 1h2l0.800 0.800h3.200v3.600h-6z" fill="#262626"/><rect x="0.600" y="9.800" width="5.400" height="5.600" fill="#f1f1f1" stroke="#262626" stroke-width="1.100"/><circle cx="3.300" cy="12.600" r="1.300" fill="none" stroke="#262626" stroke-width="0.900"/></svg>
<svg style="left:808.9px;top:81.2px;" width="17" height="17" viewBox="0 0 17 17"><path d="M0.200 5L4.400 0.200H16.200L11.800 5z" fill="#262626"/><path d="M1.400 15.200L4.800 11.300H14.800L11.400 15.200z" fill="#f1f1f1" stroke="#262626" stroke-width="1.100"/></svg>
<svg style="left:821.2px;top:91.7px" width="7" height="7" viewBox="0 0 7 7"><path d="M7 -1V7H-1z" fill="#f1f1f1"/><path d="M6.400 0.800V6.400H0.800z" fill="#262626"/></svg>
<svg style="left:834.8px;top:81.2px;" width="18" height="17" viewBox="0 0 18 17"><path d="M8.400 0H14V2.600H16.600V9.600H11.800V7H6.200V3.400H8.400z" fill="#262626"/><path d="M9 2L11.200 5.200L13.400 2" fill="none" stroke="#f1f1f1" stroke-width="1.100"/><rect x="0.600" y="7.400" width="11" height="8" fill="#f1f1f1" stroke="#262626" stroke-width="1.200"/><ellipse cx="5.400" cy="11.400" rx="1.900" ry="2.300" fill="none" stroke="#262626" stroke-width="1.100"/></svg>
<svg style="left:847.1px;top:91.7px" width="7" height="7" viewBox="0 0 7 7"><path d="M7 -1V7H-1z" fill="#f1f1f1"/><path d="M6.400 0.800V6.400H0.800z" fill="#262626"/></svg>
<svg style="left:808.9px;top:106.2px;" width="17" height="17" viewBox="0 0 17 17"><path d="M0.200 15.800L16.200 0.200" stroke="#262626" stroke-width="1.100"/><circle cx="10.900" cy="5.100" r="1.600" fill="#f1f1f1" stroke="#262626" stroke-width="1"/><circle cx="4.900" cy="11.200" r="1.600" fill="#f1f1f1" stroke="#262626" stroke-width="1"/></svg>
<svg style="left:821.2px;top:116.7px" width="7" height="7" viewBox="0 0 7 7"><path d="M7 -1V7H-1z" fill="#f1f1f1"/><path d="M6.400 0.800V6.400H0.800z" fill="#262626"/></svg>
<svg style="left:861.9px;top:56.2px;" width="17" height="17" viewBox="0 0 17 17"><path d="M0.800 0V15.600M15.400 0V15.600M0.800 1.400H15.400M3 0.200V2.600M13.200 0.200V2.600" fill="none" stroke="#262626" stroke-width="1.100"/><path d="M0.800 11.800L4 8.600H15.400V12.400L12.400 15.600H0.800z" fill="#262626"/><rect x="1.600" y="12.200" width="10.200" height="2.600" fill="#f1f1f1"/></svg>
<svg style="left:888.1999999999999px;top:56.2px;" width="17" height="17" viewBox="0 0 17 17"><path d="M0.600 9V11.400A7.600 3.800 0 0 0 15.800 11.400V9" fill="#f1f1f1" stroke="#262626" stroke-width="1.100"/><ellipse cx="8.200" cy="8.800" rx="7.600" ry="3.900" fill="#262626"/><path d="M4.200 10.800L13.600 3.200" stroke="#f1f1f1" stroke-width="1.100"/><path d="M4.200 10.800L14 2.800" stroke="#262626" stroke-width="0.010"/><circle cx="13.400" cy="2.600" r="2.200" fill="#f1f1f1" stroke="#262626" stroke-width="1"/><path d="M11.400 4.600L15.400 0.600" stroke="#262626" stroke-width="0.900"/></svg>
<svg style="left:861.9px;top:81.2px;" width="17" height="17" viewBox="0 0 17 17"><ellipse cx="8.200" cy="8" rx="7.600" ry="7.400" fill="#f1f1f1" stroke="#262626" stroke-width="1.100"/><path d="M0.800 6.400A7.600 4.600 0 0 1 15.600 6.400L12.800 8.400L8.200 3.400L3.600 8.400z" fill="#262626"/><path d="M0.400 15.200L8.200 7.400L16 15.200" fill="none" stroke="#262626" stroke-width="1.200"/><path d="M5.800 4.600L8.200 9.600M10.600 4.600L8.200 9.600" stroke="#f1f1f1" stroke-width="0.900"/></svg>
<svg style="left:888.1999999999999px;top:81.2px;" width="17" height="17" viewBox="0 0 17 17"><path d="M0.600 9V11.400A7.600 3.800 0 0 0 15.800 11.400V9" fill="#f1f1f1" stroke="#262626" stroke-width="1.100"/><ellipse cx="8.200" cy="8.800" rx="7.600" ry="3.900" fill="#262626"/><path d="M8.200 8.800L12.200 5.400" stroke="#f1f1f1" stroke-width="1.100"/><text x="11.600" y="5.600" font-family="Liberation Sans, sans-serif" font-size="6.800" fill="#262626">R</text></svg>
<svg style="left:861.9px;top:106.2px;" width="17" height="17" viewBox="0 0 17 17"><path d="M1.400 1.200H11.200M1.400 0V3.400M11.200 0V3.400" stroke="#262626" stroke-width="1.100" fill="none"/><path d="M0.600 6.200L1.800 4.800H11.400V5.600H15.800M0.600 15.600H15.800" stroke="#262626" stroke-width="1.200" fill="none"/><rect x="0.700" y="6.200" width="10.400" height="9.200" fill="#f1f1f1" stroke="#262626" stroke-width="1.200"/><path d="M0.700 4.600h10.600v1.800h-10.600z" fill="#262626"/><circle cx="5.800" cy="10.600" r="2.600" fill="none" stroke="#262626" stroke-width="1.300"/><path d="M3.600 8L8.400 13.600" stroke="#262626" stroke-width="1.300"/><path d="M14 6.600V14.600M13 8.200L14 6.400L15 8.200M13 13L14 14.800L15 13" stroke="#262626" stroke-width="1" fill="none"/></svg>
<svg style="left:888.1999999999999px;top:106.2px;" width="17" height="17" viewBox="0 0 17 17"><path d="M6.600 0.400V7.600L15.800 15.600H8.400L0.800 8.400L6.600 7.600M15.800 15.600V8L8.400 1.200" fill="none" stroke="#262626" stroke-width="1.100"/><path d="M8.400 15.600V9.200" stroke="#262626" stroke-width="1"/><path d="M4.600 1C2.200 1.600 0.800 3.400 0.800 5.800M0.800 5.800L0 3.800M0.800 5.800L2.800 4.800" fill="none" stroke="#262626" stroke-width="1.200"/><path d="M9.800 3.400L14.800 8M9.600 5L9.800 3.200L11.400 3.400M13.200 7.800L15 8.200L14.800 6.400" fill="none" stroke="#262626" stroke-width="0.900"/></svg>
<svg style="left:915.1999999999999px;top:56.2px;" width="17" height="17" viewBox="0 0 17 17"><path d="M1.200 10L11.600 1.200C14 -0.400 17 2.600 15.600 5L5.800 14.600z" fill="#262626"/><path d="M2.200 10.600L6 7.400L8.800 10.800L5.400 14z" fill="#f1f1f1"/><ellipse cx="3.700" cy="12.400" rx="2.700" ry="3.300" transform="rotate(40 3.700 12.400)" fill="#f1f1f1" stroke="#262626" stroke-width="1.100"/><path d="M6.200 7.200Q9 8 9.200 10.800M8.200 5.600Q11 6.400 11.200 9.200M10.200 4Q13 4.800 13.200 7.600M12 2.600Q14.600 3.400 14.800 6" fill="none" stroke="#f1f1f1" stroke-width="0.800"/></svg>
<svg style="left:941.0px;top:56.2px;" width="17" height="17" viewBox="0 0 17 17"><path d="M4.200 3H12.400A2.200 5.400 0 0 1 12.400 13.800H4.200" fill="#f1f1f1" stroke="#262626" stroke-width="1.100"/><ellipse cx="4.200" cy="8.400" rx="2.400" ry="5.400" fill="#f1f1f1" stroke="#262626" stroke-width="1.500"/><path d="M0 8.400H3M5 8.400H7M9 8.400H16.200" stroke="#262626" stroke-width="1"/></svg>
<svg style="left:966.9px;top:56.2px;" width="17" height="17" viewBox="0 0 17 17"><path d="M0.200 13.400L4.200 9.800H16V12.400L12.400 15.800H0.200z" fill="#262626"/><path d="M1.400 14.400H11.600" stroke="#f1f1f1" stroke-width="1.300"/><path d="M6.600 11.600L11.800 0.600H16" fill="none" stroke="#262626" stroke-width="1.100"/><path d="M6.400 12L6.200 9.400M6.400 12L8.600 10.400" stroke="#f1f1f1" stroke-width="0.800"/></svg>
<svg style="left:915.1999999999999px;top:81.2px;" width="17" height="17" viewBox="0 0 17 17"><path d="M0.200 13.400L4.200 9.800H16V12.400L12.400 15.800H0.200z" fill="#262626"/><path d="M1.400 14.400H11.600" stroke="#f1f1f1" stroke-width="1.300"/><path d="M6 12L9.400 0.800" fill="none" stroke="#262626" stroke-width="1.100"/><path d="M6 12.200L5.600 9.800M6 12.200L8 10.600" stroke="#f1f1f1" stroke-width="0.800"/><path d="M15.600 0.800H10.800V6.400H15.600M10.800 3.600H15" fill="none" stroke="#262626" stroke-width="1.100"/></svg>
<svg style="left:941.0px;top:81.2px;" width="17" height="17" viewBox="0 0 17 17"><path d="M0.200 13.400L4.200 9.800H16V12.400L12.400 15.800H0.200z" fill="#262626"/><path d="M1.400 14.400H11.600" stroke="#f1f1f1" stroke-width="1.300"/><path d="M4.200 7.600H10.400M4.200 7.600L7.200 12.400L15.400 0.200" fill="none" stroke="#262626" stroke-width="1.100"/><path d="M5.600 10L7.200 12.600L8.800 10" stroke="#f1f1f1" stroke-width="0.700" fill="none"/></svg>
<svg style="left:966.9px;top:81.2px;" width="17" height="17" viewBox="0 0 17 17"><path d="M0.200 13.400L4.200 9.800H16V12.400L12.400 15.800H0.200z" fill="#262626"/><path d="M1.400 14.400H11.600" stroke="#f1f1f1" stroke-width="1.300"/><path d="M6.400 7.600V11.400" stroke="#262626" stroke-width="1.100"/><path d="M4.200 12.600L6.400 10.200L8.600 12.600" fill="#f1f1f1" stroke="#f1f1f1" stroke-width="0.600"/><rect x="3.400" y="0.500" width="6.200" height="7" fill="#f1f1f1" stroke="#262626" stroke-width="1.100"/><text x="4.400" y="6.200" font-family="Liberation Sans, sans-serif" font-size="5.600" fill="#262626">A</text></svg>
<svg style="left:915.1999999999999px;top:106.2px;" width="17" height="17" viewBox="0 0 17 17"><path d="M0.200 13.400L4.200 9.800H16V12.400L12.400 15.800H0.200z" fill="#262626"/><path d="M1.400 14.400H11.600" stroke="#f1f1f1" stroke-width="1.300"/><path d="M6.400 6.400V11.800" stroke="#262626" stroke-width="1.100"/><rect x="6.400" y="0.600" width="9.200" height="5.200" fill="#f1f1f1" stroke="#262626" stroke-width="1.100"/><path d="M9.400 0.600V5.800M12.400 0.600V5.800" stroke="#262626" stroke-width="1.100"/><path d="M3.600 12.800H9.200" stroke="#f1f1f1" stroke-width="0.900"/></svg>
<svg style="left:941.0px;top:106.2px;" width="17" height="17" viewBox="0 0 17 17"><path d="M0.200 13.400L4.200 9.800H16V12.400L12.400 15.800H0.200z" fill="#262626"/><path d="M1.400 14.400H11.600" stroke="#f1f1f1" stroke-width="1.300"/><path d="M9.200 0.400L4.400 7.400H14z" fill="#f1f1f1" stroke="#262626" stroke-width="1"/><path d="M9.200 7.400V12" stroke="#262626" stroke-width="1"/><path d="M8.200 5.800C8.200 3.400 10.400 3.600 10.200 5C10 6 9 6 9 6.800" fill="none" stroke="#262626" stroke-width="0.800"/><path d="M7 12.400L9.200 9.600L11.400 12.400" fill="none" stroke="#f1f1f1" stroke-width="0.800"/></svg>
<svg style="left:953.3000000000001px;top:116.7px" width="7" height="7" viewBox="0 0 7 7"><path d="M7 -1V7H-1z" fill="#f1f1f1"/><path d="M6.400 0.800V6.400H0.800z" fill="#262626"/></svg>
<svg style="left:966.9px;top:106.2px;" width="17" height="17" viewBox="0 0 17 17"><text x="-0.300" y="15.800" font-family="Liberation Serif, serif" font-weight="bold" font-size="23.700" fill="#262626">T</text></svg>
<svg style="left:993.4px;top:56.2px;" width="17" height="17" viewBox="0 0 17 17"><path d="M3.600 9.200L0.200 15.400H11.800L15 9.200" fill="none" stroke="#262626" stroke-width="1.100"/><path d="M7 9.200H11.600M13.200 9.200H14.200" stroke="#262626" stroke-width="1.200"/><path d="M1 0.200L5.800 8.400M1.200 6.400L5.800 8.600L6 3.400" fill="none" stroke="#262626" stroke-width="1.100"/><text x="10.200" y="8.600" font-family="Liberation Sans, sans-serif" font-size="11.500" fill="#262626">?</text></svg>
<span class="t" style="left:1015px;top:52.14px;font-size:12px;line-height:14px;color:#1e1e1e;letter-spacing:0.050px;">Информация об</span>
<span class="t" style="left:1015px;top:63.14px;font-size:12px;line-height:14px;color:#1e1e1e;letter-spacing:-0.134px;">объекте</span>
<svg style="left:993.4px;top:81.2px;" width="17" height="17" viewBox="0 0 17 17"><path d="M0.400 4.400L4.200 0.400H11V4.800H16V12L12.200 15.800H0.400z" fill="#262626"/><path d="M1.400 5H7.200V9.600H12V14.800H1.400z" fill="#f1f1f1"/></svg>
<span class="t" style="left:1015px;top:82.14px;font-size:12px;line-height:14px;color:#1e1e1e;letter-spacing:-0.085px;">МЦХ модели</span>
<svg style="left:993.4px;top:106.2px;" width="17" height="14" viewBox="0 0 17 14"><path d="M0.200 8.600C2.200 8.600 3.400 3.600 5.800 3.600C8.600 3.600 9.400 9.600 15.800 9.600" fill="none" stroke="#444" stroke-width="1.100"/><path d="M0.200 8.600L1.600 10.800L3 9.400L5.800 12L8.600 9.600L11.200 11.400L14.800 11.800L15.800 9.600" fill="none" stroke="#666" stroke-width="0.900"/><path d="M1.200 8L1.600 10.800M2.600 6L3 9.400M4.200 4.200L4.600 10.800M5.800 3.600V12M7.400 4.400L7.200 10.800M8.600 6L8.600 9.600M10 7.600L10.200 10.600M11.600 8.600L11.200 11.400M13.400 9.200L13.200 11.600M14.800 9.600V11.800" stroke="#777" stroke-width="0.700"/></svg>
<svg style="left:1005.7px;top:116.7px" width="7" height="7" viewBox="0 0 7 7"><path d="M7 -1V7H-1z" fill="#f1f1f1"/><path d="M6.400 0.800V6.400H0.800z" fill="#262626"/></svg>
<span class="t" style="left:1015px;top:102.14px;font-size:12px;line-height:14px;color:#1e1e1e;letter-spacing:-0.066px;">График</span>
<span class="t" style="left:1015px;top:113.14px;font-size:12px;line-height:14px;color:#1e1e1e;letter-spacing:0.068px;">кривизны</span>
<svg style="left:1113.9px;top:56.2px;" width="17" height="17" viewBox="0 0 17 17"><path d="M3.600 9.200L0.200 15.400H11.800L15 9.200" fill="none" stroke="#262626" stroke-width="1.100"/><path d="M8 9.200H11.600M13.200 9.200H14.200" stroke="#262626" stroke-width="1.200"/><path d="M0.400 6.400L8 3M3.600 4.400C4.600 7 5.600 9.400 7.600 11.200" fill="none" stroke="#262626" stroke-width="1.100"/><text x="10.200" y="8.600" font-family="Liberation Sans, sans-serif" font-size="11.500" fill="#262626">?</text></svg>
<svg style="left:1126.2px;top:66.7px" width="7" height="7" viewBox="0 0 7 7"><path d="M7 -1V7H-1z" fill="#f1f1f1"/><path d="M6.400 0.800V6.400H0.800z" fill="#262626"/></svg>
<span class="t" style="left:1135.2px;top:52.14px;font-size:12px;line-height:14px;color:#1e1e1e;letter-spacing:-0.221px;">Расстояние и</span>
<span class="t" style="left:1135.2px;top:63.14px;font-size:12px;line-height:14px;color:#1e1e1e;letter-spacing:0.145px;">угол</span>
<svg style="left:1113.9px;top:81.2px;" width="17" height="17" viewBox="0 0 17 17"><path d="M0.400 10L4.200 6.200V3.400L7 0.400H13.200V6.800H16V12L12.200 15.800H0.400z" fill="#262626"/><path d="M5.400 4H9.600V12H5.400z" fill="#f1f1f1"/><path d="M1.400 11H4.200V13H10.800V11H12V14.800H1.400z" fill="#f1f1f1"/></svg>
<span class="t" style="left:1135.2px;top:77.14px;font-size:12px;line-height:14px;color:#1e1e1e;letter-spacing:-0.068px;">Проверка</span>
<span class="t" style="left:1135.2px;top:88.14px;font-size:12px;line-height:14px;color:#1e1e1e;letter-spacing:0.099px;">коллизий</span>
<svg style="left:1113.9px;top:106.2px;" width="17" height="17" viewBox="0 0 17 17"><path d="M0.400 0.400C0.800 5 1.600 7.600 3.600 10" fill="none" stroke="#262626" stroke-width="1.100"/><circle cx="4.200" cy="10.800" r="1.300" fill="#f1f1f1" stroke="#262626" stroke-width="0.900"/><path d="M5.200 11.600C8 13 10 14.800 15.200 14.800" fill="none" stroke="#262626" stroke-width="1.100"/><text x="3.400" y="8.800" font-family="Liberation Sans, sans-serif" font-size="10.500" fill="#262626">G?</text></svg>
<span class="t" style="left:1135.2px;top:102.14px;font-size:12px;line-height:14px;color:#1e1e1e;letter-spacing:-0.068px;">Проверка</span>
<span class="t" style="left:1135.2px;top:113.14px;font-size:12px;line-height:14px;color:#1e1e1e;letter-spacing:-0.024px;">непрерывности</span>
<svg style="left:1234.8000000000002px;top:56.2px;" width="17" height="17" viewBox="0 0 17 17"><path d="M9 2.400H0.600V15.200H15.600V6.600" fill="none" stroke="#262626" stroke-width="1.200"/><rect x="9.200" y="0.200" width="6.800" height="6.400" fill="#262626"/><path d="M10.600 1.800H14.600M12.600 1.800V5.400" stroke="#f1f1f1" stroke-width="1.200"/><path d="M8.600 12H15.600M8.600 12V15.200" stroke="#262626" stroke-width="1.200"/><path d="M8 7H3M4.800 5.200L2.600 7L4.800 8.800M9.800 8.600V10H12.400V8.400" fill="none" stroke="#262626" stroke-width="1.100"/><path d="M5.400 7.400h1" stroke="#262626" stroke-width="0.500"/></svg>
<span class="t" style="left:1255.6px;top:52.14px;font-size:12px;line-height:14px;color:#1e1e1e;letter-spacing:-0.114px;">Создать чертеж</span>
<span class="t" style="left:1255.6px;top:63.14px;font-size:12px;line-height:14px;color:#1e1e1e;letter-spacing:0.192px;">по шаблону</span>
<svg style="left:1234.8000000000002px;top:81.2px;" width="17" height="17" viewBox="0 0 17 17"><path d="M10 0.200H12L12.800 1H16V4.800H10z" fill="#262626"/><path d="M8.800 5.600H0.600V15.200H15.600V7" fill="none" stroke="#262626" stroke-width="1.200"/><rect x="2.600" y="7.400" width="5.800" height="3" fill="none" stroke="#262626" stroke-width="1.100"/><path d="M9.400 12.400H15.600M9.400 12.400V15.200" stroke="#262626" stroke-width="1.200"/></svg>
<span class="t" style="left:1255.6px;top:77.14px;font-size:12px;line-height:14px;color:#1e1e1e;letter-spacing:-0.031px;">Управление</span>
<span class="t" style="left:1255.6px;top:88.14px;font-size:12px;line-height:14px;color:#1e1e1e;letter-spacing:-0.029px;">связанными ч...</span>
<svg style="left:1354.8000000000002px;top:56.2px;" width="17" height="17" viewBox="0 0 17 17"><path d="M8.400 0.600H13L16 3.600V9.200H8.400z" fill="#f1f1f1" stroke="#262626" stroke-width="1.100"/><path d="M13 0.600V3.600H16" fill="none" stroke="#262626" stroke-width="0.900"/><path d="M6.800 0.800C4.600 0.800 3.600 1.800 3.600 4.400M2 3.200L3.600 5L5.200 3.200" fill="none" stroke="#262626" stroke-width="1.200"/><rect x="0.600" y="6.200" width="7.200" height="9.200" fill="#f1f1f1" stroke="#262626" stroke-width="1.200"/><path d="M0.600 8.600H7.800M0.600 10.800H7.800M0.600 13.100H7.800M3.200 6.200V15.400" stroke="#262626" stroke-width="1.100"/></svg>
<span class="t" style="left:1376.2px;top:52.14px;font-size:12px;line-height:14px;color:#1e1e1e;letter-spacing:-0.485px;">Создать</span>
<span class="t" style="left:1376.2px;top:63.14px;font-size:12px;line-height:14px;color:#1e1e1e;letter-spacing:-0.142px;">спецификаци...</span>
<svg style="left:1354.8000000000002px;top:81.2px;" width="17" height="17" viewBox="0 0 17 17"><path d="M10.400 0.200H12.400L13.200 1H16.200V4.800H10.400z" fill="#262626"/><rect x="0.600" y="3.400" width="9" height="12.200" fill="#f1f1f1" stroke="#262626" stroke-width="1.200"/><path d="M0.600 5.400H9.600M0.600 7.400H9.600M0.600 9.400H9.600M0.600 11.400H9.600M0.600 13.400H9.600" stroke="#262626" stroke-width="1.100"/><path d="M3.600 3.400V15.600M6.800 3.400V15.600" stroke="#262626" stroke-width="0.500"/></svg>
<span class="t" style="left:1376.2px;top:77.14px;font-size:12px;line-height:14px;color:#1e1e1e;letter-spacing:-0.111px;">Управление</span>
<span class="t" style="left:1376.2px;top:88.14px;font-size:12px;line-height:14px;color:#1e1e1e;letter-spacing:-0.139px;">связанными с...</span>
<svg style="left:1475.6000000000001px;top:56.2px;" width="17" height="17" viewBox="0 0 17 17"><path d="M0.400 4.200L4.200 0.300H13.200V2.400L10 6.400V9.600L6.800 13.600V15.600H0.400V12.800H2.800V6.800H0.400z" fill="#262626"/><path d="M1.200 5H8.800V6.200H5.600V13.400H8V14.600H1.200V13.400H3.800V6.200H1.200z" fill="#f1f1f1"/><path d="M16.200 12.400H9M11.200 10.200L8.600 12.400L11.200 14.600" fill="none" stroke="#262626" stroke-width="1.300"/></svg>
<span class="t" style="left:1496.9px;top:52.14px;font-size:12px;line-height:14px;color:#1e1e1e;letter-spacing:-0.247px;">Выбрать</span>
<span class="t" style="left:1496.9px;top:63.14px;font-size:12px;line-height:14px;color:#1e1e1e;letter-spacing:-0.168px;">материал...</span>
<svg style="left:1475.6000000000001px;top:81.2px;" width="17" height="17" viewBox="0 0 17 17"><path d="M0.400 4.200L4.200 0.300H13.200V2.400L10 6.400V9.600L6.800 13.600V15.600H0.400V12.800H2.800V6.800H0.400z" fill="#cdc8cd"/><path d="M1.200 5H8.800V6.200H5.600V13.400H8V14.600H1.200V13.400H3.800V6.200H1.200z" fill="#f1f1f1"/><circle cx="11.400" cy="10.400" r="4.600" fill="#f1f1f1" stroke="#cdc8cd" stroke-width="1"/><path d="M11.400 9.400V13.200" stroke="#cdc8cd" stroke-width="1.200"/><circle cx="11.400" cy="7.600" r="0.800" fill="#cdc8cd"/></svg>
<span class="t" style="left:1496.9px;top:77.14px;font-size:12px;line-height:14px;color:#c4c4c4;letter-spacing:0.019px;">Информация о</span>
<span class="t" style="left:1496.9px;top:88.14px;font-size:12px;line-height:14px;color:#c4c4c4;letter-spacing:-0.243px;">материале...</span>
<svg style="left:1475.6000000000001px;top:106.2px;" width="17" height="17" viewBox="0 0 17 17"><path d="M0.400 4.200L4.200 0.300H13.200V2.400L10 6.400V9.600L6.800 13.600V15.600H0.400V12.800H2.800V6.800H0.400z" fill="#cdc8cd"/><path d="M1.200 5H8.800V6.200H5.600V13.400H8V14.600H1.200V13.400H3.800V6.200H1.200z" fill="#f1f1f1"/><path d="M7.200 13.400C7.200 9.200 13.200 9.200 13.600 12.800M12 12.400L13.800 13.400L15.600 12M13.600 15.400H7.600M7.800 12L9 10.600L10.200 12" fill="none" stroke="#cdc8cd" stroke-width="1"/></svg>
<span class="t" style="left:1496.9px;top:102.14px;font-size:12px;line-height:14px;color:#c4c4c4;letter-spacing:-0.029px;">Обновить</span>
<span class="t" style="left:1496.9px;top:113.14px;font-size:12px;line-height:14px;color:#c4c4c4;letter-spacing:-0.093px;">данные по мат...</span>
<svg style="left:1596.9px;top:56.2px;" width="17" height="17" viewBox="0 0 17 17"><path d="M5.200 5L9.600 0.800C10.600 -0.200 12.400 1.200 11.600 2.400L8 7.600z" fill="#262626"/><path d="M8.400 2.800L10.400 4.400M9.400 1.800L11.200 3.400" stroke="#9ab" stroke-width="0.600"/><path d="M1.200 5.200L0.400 7.400V9.200L1.600 10.800H5.200L6.800 9V6.800L5.800 5.200z" fill="#f1f1f1" stroke="#262626" stroke-width="1.100"/><path d="M12 8.200V15.800M8.200 12H15.800" stroke="#262626" stroke-width="1.700"/></svg>
<span class="t" style="left:1618px;top:52.14px;font-size:12px;line-height:14px;color:#1e1e1e;letter-spacing:-0.433px;">Вставить</span>
<span class="t" style="left:1618px;top:63.14px;font-size:12px;line-height:14px;color:#1e1e1e;letter-spacing:-0.111px;">элемент</span>
<svg style="left:1596.9px;top:81.2px;" width="17" height="17" viewBox="0 0 17 17"><defs><pattern id="hh2" width="2.600" height="2.600" patternUnits="userSpaceOnUse" patternTransform="rotate(-45)"><rect width="2.600" height="1.100" fill="#333"/></pattern></defs><rect x="0.600" y="0.600" width="15" height="15" fill="url(#hh2)" stroke="#262626" stroke-width="1.200"/><path d="M0.600 0.600L4.600 4.400M15.600 0.600L11.600 4.400M0.600 15.600L4.600 11.600" stroke="#262626" stroke-width="1.100"/><rect x="4.600" y="4.400" width="7" height="7.200" fill="#f1f1f1" stroke="#262626" stroke-width="1.100"/><rect x="7.200" y="7.400" width="9.400" height="9.400" fill="#f1f1f1"/><path d="M12 8.200V15.800M8.200 12H15.800" stroke="#262626" stroke-width="1.700"/></svg>
<span class="t" style="left:1618px;top:77.14px;font-size:12px;line-height:14px;color:#1e1e1e;letter-spacing:-0.433px;">Вставить</span>
<span class="t" style="left:1618px;top:88.14px;font-size:12px;line-height:14px;color:#1e1e1e;letter-spacing:-0.007px;">конструктивн...</span>
<svg style="left:1596.9px;top:106.2px;" width="17" height="17" viewBox="0 0 17 17"><circle cx="9.400" cy="3.800" r="3.500" fill="#f1f1f1" stroke="#262626" stroke-width="1.200"/><path d="M4.600 5.400L8 2.200C9.600 1 11.400 3 10.400 4.400L7.600 8z" fill="#262626"/><path d="M1.200 5.200L0.400 7.400V9.200L1.600 10.800H5.200L6.800 9V6.800L5.800 5.200z" fill="#f1f1f1" stroke="#262626" stroke-width="1.100"/><path d="M12 8.200V15.800M8.200 12H15.800" stroke="#262626" stroke-width="1.700"/></svg>
<span class="t" style="left:1618px;top:102.14px;font-size:12px;line-height:14px;color:#1e1e1e;letter-spacing:-0.433px;">Вставить</span>
<span class="t" style="left:1618px;top:113.14px;font-size:12px;line-height:14px;color:#1e1e1e;letter-spacing:-0.052px;">крепежное со...</span>
<div style="left:0px;top:145px;width:26px;height:151px;background:#f0f0f0;"></div>
<div style="left:0px;top:296px;width:26px;height:744px;background:#c9c9c9;"></div>
<div style="left:0px;top:145px;width:26px;height:25px;background:#4b4b4b;"></div>
<svg style="left:7px;top:149px;" width="13" height="17" viewBox="0 0 13 17"><path d="M2 2.5V14.6H9M2 5.2H9M2 9.9H9" fill="none" stroke="#ffffff" stroke-width="1.2"/>
<rect x="0.6" y="0.6" width="2.8" height="2.8" fill="#4b4b4b" stroke="#ffffff" stroke-width="0.9"/><rect x="8.6" y="3.8" width="2.8" height="2.8" fill="#4b4b4b" stroke="#ffffff" stroke-width="0.9"/><rect x="8.6" y="8.5" width="2.8" height="2.8" fill="#4b4b4b" stroke="#ffffff" stroke-width="0.9"/><rect x="8.6" y="13.2" width="2.8" height="2.8" fill="#4b4b4b" stroke="#ffffff" stroke-width="0.9"/></svg>
<svg style="left:7px;top:174px;" width="13" height="17" viewBox="0 0 13 17"><rect x="0.7" y="0.7" width="11.6" height="15.6" fill="#f1f1f1" stroke="#262626" stroke-width="1.3"/><rect x="3" y="3.2" width="2.8" height="2.8" fill="none" stroke="#262626" stroke-width="1"/><path d="M7.2 4.6h3M7.2 8.8h3M7.2 12.6h3" stroke="#262626" stroke-width="1.2"/><path d="M2.8 8.6l1.4 1.4l2-2.4M2.8 12.4l1.4 1.4l2-2.4" fill="none" stroke="#262626" stroke-width="1.2"/></svg>
<span class="t" style="left:5.5px;top:197.7px;font-family:'Liberation Serif',serif;font-style:italic;font-size:18px;line-height:22px;color:#262626">f</span>
<span class="t" style="left:11.7px;top:202.6px;font-size:12px;line-height:14px;color:#262626">x</span>
<svg style="left:4.6px;top:224.2px;" width="17" height="17" viewBox="0 0 17 17"><rect x="0.5" y="0.8" width="16" height="3.6" rx="1.6" fill="#262626"/><rect x="0.5" y="6.6" width="16" height="3.6" rx="1.6" fill="#262626"/><rect x="0.5" y="12.4" width="16" height="3.6" rx="1.6" fill="#262626"/></svg>
<svg style="left:6px;top:251.5px;" width="14" height="14" viewBox="0 0 14 14"><rect x="4.6" y="0.4" width="4.8" height="4.8" fill="#262626"/><path d="M7 5v3.4M1.8 11V8.2h10.4V11M7 8v3" fill="none" stroke="#262626" stroke-width="1.2"/><rect x="0.2" y="10.4" width="3.4" height="3.4" fill="#262626"/><rect x="5.3" y="10.4" width="3.4" height="3.4" fill="#262626"/><rect x="10.4" y="10.4" width="3.4" height="3.4" fill="#262626"/></svg>
<svg style="left:5px;top:273px;" width="17" height="17" viewBox="0 0 17 17"><circle cx="8.5" cy="8.5" r="7.6" fill="none" stroke="#262626" stroke-width="1.3"/><path d="M6.500 1.400V11.500H15.800M3.500 3V14.500H13.600" fill="none" stroke="#262626" stroke-width="1.100"/></svg>
<div style="left:27px;top:145px;width:310px;height:895px;background:#f2f2f2;"></div>
<div style="left:26px;top:145px;width:1px;height:895px;background:#6e6e6e;"></div>
<div style="left:337px;top:145px;width:1px;height:895px;background:#6e6e6e;"></div>
<div style="left:27px;top:145px;width:310px;height:16px;background:#cbcbcb;"></div>
<span class="t" style="left:29.6px;top:146.99px;font-size:11px;line-height:13px;color:#262626;letter-spacing:0.327px;">Дерево</span>
<svg style="left:322px;top:147px;" width="13" height="13" viewBox="0 0 13 13"><circle cx="6.5" cy="6.5" r="3.6" fill="none" stroke="#262626" stroke-width="2"/><path d="M6.5 0.3v2.2M6.5 10.5v2.2M0.3 6.5h2.2M10.5 6.5h2.2M2.1 2.1l1.6 1.6M9.3 9.3l1.6 1.6M10.9 2.1L9.3 3.7M3.7 9.3L2.1 10.9" stroke="#262626" stroke-width="1.9"/></svg>
<div style="left:27px;top:161px;width:310px;height:1px;background:#6a6a6a;"></div>
<div style="left:27px;top:162px;width:26px;height:25px;background:#4b4b4b;"></div>
<svg style="left:31px;top:165px;" width="18" height="18" viewBox="0 0 18 18"><path d="M2.400 3V15.600H7M2.400 7.400H5.200M5.200 9.400H7.400M5.200 7.400V13.200H7.400" fill="none" stroke="#ffffff" stroke-width="1.100"/><rect x="0.900" y="0.700" width="2.800" height="2.800" fill="#4b4b4b" stroke="#ffffff" stroke-width="0.900"/>
<text x="7" y="5.200" font-family="Liberation Sans, sans-serif" font-size="5.500" font-weight="bold" fill="#ffffff">1</text><text x="10.800" y="9.600" font-family="Liberation Sans, sans-serif" font-size="5.500" font-weight="bold" fill="#ffffff">11</text><text x="10.800" y="15.200" font-family="Liberation Sans, sans-serif" font-size="5.500" font-weight="bold" fill="#ffffff">12</text><text x="7.600" y="17.200" font-family="Liberation Sans, sans-serif" font-size="5.500" font-weight="bold" fill="#ffffff">2</text></svg>
<svg style="left:57px;top:165px;" width="16" height="18" viewBox="0 0 16 18"><path d="M3 3V15.4H9M3 6.2H7.4V10.8H11M7.4 7.4H11" fill="none" stroke="#262626" stroke-width="1.2"/><rect x="1.4" y="0.6" width="3" height="3" fill="#f1f1f1" stroke="#262626" stroke-width="0.9"/><rect x="10.6" y="6" width="2.8" height="2.8" fill="#f1f1f1" stroke="#262626" stroke-width="0.9"/><rect x="10.6" y="9.6" width="2.8" height="2.8" fill="#f1f1f1" stroke="#262626" stroke-width="0.9"/><rect x="8.6" y="14" width="2.8" height="2.8" fill="#f1f1f1" stroke="#262626" stroke-width="0.9"/></svg>
<svg style="left:83px;top:165px;" width="18" height="18" viewBox="0 0 18 18"><path d="M6 13V5L9.6 1.4h4.2L17 5.4V13z" fill="#f1f1f1" stroke="#262626" stroke-width="1.2"/><path d="M3.6 15V8.2L6.8 5h4l2.8 3.2V15z" fill="#f1f1f1" stroke="#262626" stroke-width="1.2"/><circle cx="10.6" cy="9.4" r="2.6" fill="none" stroke="#262626" stroke-width="1.1"/><rect x="0.8" y="11" width="6" height="6" fill="#f1f1f1" stroke="#262626" stroke-width="1.1"/><circle cx="3.8" cy="14" r="1.3" fill="none" stroke="#262626" stroke-width="1"/></svg>
<svg style="left:109px;top:165px;" width="18" height="18" viewBox="0 0 18 18"><rect x="1" y="1" width="15.6" height="15.6" fill="none" stroke="#262626" stroke-width="1.2" stroke-dasharray="1.6 1.4"/><rect x="3.6" y="3.8" width="10.4" height="10.4" fill="none" stroke="#262626" stroke-width="1.1" stroke-dasharray="1.4 1.4"/></svg>
<div style="left:27px;top:187px;width:310px;height:1px;background:#1e1e1e;"></div>
<div style="left:27px;top:188px;width:26px;height:25px;background:#f0f0f0;"></div>
<div style="left:53px;top:188px;width:284px;height:25px;background:#ffffff;"></div>
<svg style="left:31px;top:191px;" width="18" height="18" viewBox="0 0 18 18"><path d="M0.6 1.2h16.8L10.6 8.6V16.6H7.4V8.6z" fill="#262626"/></svg>
<svg style="left:59px;top:193px;" width="13" height="13" viewBox="0 0 13 13"><circle cx="7.6" cy="5.2" r="3.7" fill="none" stroke="#b9b9b9" stroke-width="1.5"/><path d="M4.8 8L0.9 12" stroke="#b9b9b9" stroke-width="1.9"/></svg>
<span class="t" style="left:77.5px;top:193.14px;font-size:12px;line-height:14px;color:#b4b4b4;letter-spacing:0.230px;">Поиск (Ctrl+/)</span>
<div style="left:27px;top:213px;width:310px;height:1px;background:#5a5a5a;"></div>
<div style="left:27px;top:214px;width:52px;height:27px;background:#e4e4e4;"></div>
<div style="left:27px;top:241px;width:52px;height:1px;background:#c2c2c2;"></div>
<div style="left:79px;top:214px;width:258px;height:1px;background:#c9c6c6;"></div>
<div style="left:79px;top:215px;width:258px;height:1px;background:#35bfe4;"></div>
<div style="left:79px;top:241px;width:258px;height:1px;background:#35bfe4;"></div>
<svg style="left:93px;top:226px;" width="5" height="7" viewBox="0 0 5 7"><path d="M0.3 0.3L4.4 3.5L0.3 6.7z" fill="#262626"/></svg>
<svg style="left:102.5px;top:220px;" width="17" height="17" viewBox="0 0 17 17"><path d="M0.600 15.500V4.100L4.500 0.400V2.200" fill="none" stroke="#262626" stroke-width="1.100"/><path d="M0.600 15.400H11.600" stroke="#262626" stroke-width="1.100"/><path d="M11.400 15.400L15.800 10.400" stroke="#262626" stroke-width="1.200" stroke-dasharray="1 0.700"/>
<path d="M2.400 13.600V4.600L4.800 2.100H10.300L14.600 6.400V9.900L16 10.500L14.300 10.800L11.700 13.600z" fill="#262626"/><path d="M3.400 4.600H9.300L12.500 7.800V12.600H3.400z" fill="#f1f1f1"/>
<circle cx="6.500" cy="10.200" r="2.900" fill="#f1f1f1" stroke="#262626" stroke-width="1.200"/></svg>
<span class="t" style="left:122.2px;top:221.06px;font-size:10.8px;line-height:12.8px;color:#262626;">(</span>
<div style="left:125.4px;top:227px;width:6.2px;height:1.8px;background:#1e1e1e;"></div>
<span class="t" style="left:130.4px;top:221.06px;font-size:10.8px;line-height:12.8px;color:#262626;">)</span>
<div style="left:136px;top:214px;width:201px;height:27px;overflow:hidden"><span class="t" style="position:absolute;left:0;top:8.24px;font-size:12px;line-height:14px;letter-spacing:-0.235px;color:#1e1e1e">ВП1.15.00.000 Вышка пожарная 15 м</span></div>
<div style="left:27px;top:813px;width:310px;height:1px;background:#e3e3e3;"></div>
<div style="left:27px;top:819.5px;width:310px;height:2.5px;background:linear-gradient(#b5b5b5,#858585)"></div>
<div style="left:27px;top:822px;width:26px;height:23px;background:#4b4b4b;"></div>
<svg style="left:33px;top:824.5px;" width="13" height="17" viewBox="0 0 13 17"><path d="M2 2.5V14.6H9M2 5.2H9M2 9.9H9" fill="none" stroke="#ffffff" stroke-width="1.2"/>
<rect x="0.6" y="0.6" width="2.8" height="2.8" fill="#4b4b4b" stroke="#ffffff" stroke-width="0.9"/><rect x="8.6" y="3.8" width="2.8" height="2.8" fill="#4b4b4b" stroke="#ffffff" stroke-width="0.9"/><rect x="8.6" y="8.5" width="2.8" height="2.8" fill="#4b4b4b" stroke="#ffffff" stroke-width="0.9"/><rect x="8.6" y="13.2" width="2.8" height="2.8" fill="#4b4b4b" stroke="#ffffff" stroke-width="0.9"/></svg>
<svg style="left:60px;top:824.5px;" width="13" height="17" viewBox="0 0 13 17"><rect x="0.7" y="0.7" width="11.6" height="15.6" fill="#f1f1f1" stroke="#262626" stroke-width="1.3"/><rect x="3" y="3.2" width="2.8" height="2.8" fill="none" stroke="#262626" stroke-width="1"/><path d="M7.2 4.6h3M7.2 8.8h3M7.2 12.6h3" stroke="#262626" stroke-width="1.2"/><path d="M2.8 8.6l1.4 1.4l2-2.4M2.8 12.4l1.4 1.4l2-2.4" fill="none" stroke="#262626" stroke-width="1.2"/></svg>
<span class="t" style="left:85px;top:825.0px;font-family:'Liberation Serif',serif;font-style:italic;font-size:18px;line-height:22px;color:#262626">f</span>
<span class="t" style="left:91.2px;top:829.9px;font-size:12px;line-height:14px;color:#262626">x</span>
<div style="left:27px;top:845px;width:310px;height:3px;background:linear-gradient(#858585,#c8c8c8 60%,#f2f2f2)"></div>
<div style="left:606px;top:145px;width:588px;height:26px;background:#f0f0f0;border:1px solid #707070;box-sizing:border-box;border-top:none"></div>
<div style="left:607px;top:145px;width:15px;height:25px;background:#e4e4e4;"></div>
<div style="left:622px;top:145px;width:1.2px;height:25px;background:#707070;"></div>
<div style="left:678px;top:145px;width:1.2px;height:25px;background:#707070;"></div>
<div style="left:802px;top:145px;width:1.2px;height:25px;background:#707070;"></div>
<div style="left:879px;top:145px;width:1.2px;height:25px;background:#707070;"></div>
<div style="left:977px;top:145px;width:1.2px;height:25px;background:#707070;"></div>
<div style="left:1088px;top:145px;width:1.2px;height:25px;background:#707070;"></div>
<div style="left:1136.5px;top:145px;width:1.2px;height:25px;background:#707070;"></div>
<svg style="left:609.1px;top:149.2px;" width="12" height="6" viewBox="0 0 12 6"><rect x="0.00" y="0.00" width="2.1" height="1.9" fill="#3a3a3a"/><rect x="0.00" y="2.90" width="2.1" height="1.9" fill="#3a3a3a"/><rect x="2.92" y="0.00" width="2.1" height="1.9" fill="#3a3a3a"/><rect x="2.92" y="2.90" width="2.1" height="1.9" fill="#3a3a3a"/><rect x="5.84" y="0.00" width="2.1" height="1.9" fill="#3a3a3a"/><rect x="5.84" y="2.90" width="2.1" height="1.9" fill="#3a3a3a"/><rect x="8.76" y="0.00" width="2.1" height="1.9" fill="#3a3a3a"/><rect x="8.76" y="2.90" width="2.1" height="1.9" fill="#3a3a3a"/></svg>
<svg style="left:628px;top:148px;" width="18" height="18" viewBox="0 0 18 18"><path d="M2.200 2.300H8.800V9.600H15.800V15.300H2.200z" fill="none" stroke="#262626" stroke-width="1.300"/><circle cx="2.2" cy="2.3" r="1.3" fill="#f1f1f1" stroke="#262626" stroke-width="0.900"/><circle cx="8.8" cy="2.3" r="1.3" fill="#f1f1f1" stroke="#262626" stroke-width="0.900"/><circle cx="8.8" cy="9.6" r="1.3" fill="#f1f1f1" stroke="#262626" stroke-width="0.900"/><circle cx="15.8" cy="9.6" r="1.3" fill="#f1f1f1" stroke="#262626" stroke-width="0.900"/><circle cx="15.8" cy="15.3" r="1.3" fill="#f1f1f1" stroke="#262626" stroke-width="0.900"/><circle cx="2.2" cy="15.3" r="1.3" fill="#f1f1f1" stroke="#262626" stroke-width="0.900"/></svg>
<svg style="left:655px;top:148px;" width="18" height="18" viewBox="0 0 18 18"><path d="M1.400 5.400L3.400 3.400H5.600V11.400H14.200V14.400L12.600 16H1.400z" fill="#262626"/><path d="M2.400 13.400H11.600V15H2.400z" fill="#f1f1f1"/><path d="M5.600 11.400C5.600 9.400 7 8 9 8L9 11.400z" fill="#262626"/><path d="M2.200 14.200L5.200 11.400" stroke="#f1f1f1" stroke-width="0.800"/><circle cx="13.400" cy="4.800" r="3.700" fill="#262626"/><rect x="11.400" y="2.800" width="4" height="4" fill="#f1f1f1"/><circle cx="13.400" cy="4.800" r="0.900" fill="#262626"/></svg>
<svg style="left:684px;top:148px;" width="18" height="18" viewBox="0 0 18 18"><circle cx="7.200" cy="8" r="5.100" fill="none" stroke="#262626" stroke-width="1.300"/><path d="M10.800 11.800L14.600 15.600" stroke="#262626" stroke-width="1.900"/><rect x="8" y="3.600" width="8" height="6.800" fill="none" stroke="#262626" stroke-width="1" stroke-dasharray="1 1"/></svg>
<svg style="left:712px;top:153.8px;" width="10" height="6" viewBox="0 0 10 6"><path d="M0 0.100h10l-5 4.800z" fill="#262626"/></svg>
<svg style="left:732.4px;top:147.6px;" width="18" height="18" viewBox="0 0 18 18"><path d="M0.600 16.800L4.400 10.200H16.800L13 16.800z" fill="#262626"/><path d="M8.800 1.200L13.200 5.600H10.600V13.200H7V5.600H4.400z" fill="#f1f1f1" stroke="#262626" stroke-width="1.300" stroke-linejoin="miter"/></svg>
<svg style="left:758.6px;top:148.1px;" width="18" height="18" viewBox="0 0 18 18"><path d="M8.600 2V9M8.600 10.600H15.200M7.400 11.800L2 17.200" stroke="#262626" stroke-width="1.100" fill="none"/><path d="M8.600 0.600L6.800 3.800H10.400zM17.200 10.600L14 8.800V12.400zM1.200 18L2.200 14.600L4.600 17z" fill="#262626"/><rect x="6.800" y="8.800" width="3.600" height="3.600" fill="#f1f1f1" stroke="#262626" stroke-width="1"/></svg>
<svg style="left:786px;top:153.8px;" width="10" height="6" viewBox="0 0 10 6"><path d="M0 0.100h10l-5 4.800z" fill="#262626"/></svg>
<div style="left:804px;top:145px;width:26px;height:25px;background:#4b4b4b;"></div>
<svg style="left:807.6px;top:147px;" width="18" height="20" viewBox="0 0 18 20"><path d="M9.200 0.600L17 4.400V13.800L9.200 18.400L1.600 13.800V4.400z" fill="#ffffff"/><path d="M1.600 4.600L9.200 8.400L17 4.600M9.200 8.400V18.400" fill="none" stroke="#4b4b4b" stroke-width="1"/></svg>
<svg style="left:834.8px;top:147px;" width="18" height="20" viewBox="0 0 18 20"><path d="M9.200 0.800L17 4.600V13.800L9.200 18.400L1.600 13.800V4.600z" fill="none" stroke="#262626" stroke-width="1.100"/><path d="M1.600 4.600L9.200 9.200L17 4.600M9.200 9.200V18.400M9.200 0.800V9.400M1.600 13.800L9.200 9.400L17 13.800" fill="none" stroke="#262626" stroke-width="0.900"/></svg>
<svg style="left:863.1px;top:153.8px;" width="10" height="6" viewBox="0 0 10 6"><path d="M0 0.100h10l-5 4.800z" fill="#262626"/></svg>
<svg style="left:883.6px;top:147.8px;" width="20" height="18" viewBox="0 0 20 18"><path d="M3.600 8.800C6.400 3.800 12.800 3.800 17 8.800C12.800 13.400 6.400 13.400 3.600 8.800z" fill="#f1f1f1" stroke="#262626" stroke-width="1.300"/><circle cx="10.200" cy="8.600" r="2.900" fill="#262626"/><circle cx="10.200" cy="8.600" r="1" fill="#f1f1f1"/><path d="M2.600 1.200L18.400 16.200" stroke="#262626" stroke-width="1.100"/></svg>
<svg style="left:913.2px;top:153.8px;" width="10" height="6" viewBox="0 0 10 6"><path d="M0 0.100h10l-5 4.800z" fill="#262626"/></svg>
<svg style="left:932px;top:147.8px;" width="20" height="18" viewBox="0 0 20 18"><path d="M2.400 3.200H18V14H2.400z" fill="#262626"/><path d="M2.400 0.600L5 3.400M15.800 14L18.200 16.400" stroke="#262626" stroke-width="1"/><path d="M4 8.600C6.600 4.600 13.400 4.600 16.600 8.600C13.400 12.400 6.600 12.400 4 8.600z" fill="#f1f1f1"/><circle cx="10.200" cy="8.400" r="2.700" fill="#262626"/><circle cx="10.200" cy="8.400" r="1.300" fill="#999"/></svg>
<svg style="left:961.2px;top:153.8px;" width="10" height="6" viewBox="0 0 10 6"><path d="M0 0.100h10l-5 4.800z" fill="#262626"/></svg>
<div style="left:979.5px;top:145px;width:25.5px;height:25px;background:#4b4b4b;"></div>
<svg style="left:982.6px;top:148.2px;" width="18" height="18" viewBox="0 0 18 18"><path d="M3.400 12.600L15.600 4.600" stroke="#ffffff" stroke-width="1.200"/><circle cx="3.400" cy="13" r="1.700" fill="#4b4b4b" stroke="#ffffff" stroke-width="1.100"/><circle cx="15.800" cy="4.600" r="1.700" fill="#4b4b4b" stroke="#ffffff" stroke-width="1.100"/><path d="M4.400 3.800L6.400 5.800L4.400 7.800L2.400 5.800zM14.800 12L16.800 14L14.800 16L12.800 14z" fill="#4b4b4b" stroke="#ffffff" stroke-width="1.100"/></svg>
<svg style="left:1009px;top:148px;" width="18" height="18" viewBox="0 0 18 18"><path d="M6.600 3.600V1.200H16.200V13.600L13.800 16H1.800" fill="none" stroke="#262626" stroke-width="1.200"/><path d="M7.800 1.200V2.800M10 1.200V2.800M12.200 1.200V2.800M14.400 1.200V2.800" stroke="#f1f1f1" stroke-width="1"/><path d="M6.600 1h9.600v2.200H6.600z" fill="#262626"/><path d="M8 1V2.200M10.200 1V2.200M12.400 1V2.200M14.400 1V2.200" stroke="#f1f1f1" stroke-width="0.900"/><rect x="3.600" y="5" width="10.200" height="11" fill="#f1f1f1" stroke="#262626" stroke-width="1.300"/><path d="M3.600 5V16" stroke="#262626" stroke-width="2.200"/><circle cx="2.400" cy="8" r="0.900" fill="#262626"/><circle cx="2.400" cy="10.600" r="0.900" fill="#262626"/><circle cx="2.400" cy="13.200" r="0.900" fill="#262626"/></svg>
<div style="left:1033px;top:145px;width:26px;height:25px;background:#4b4b4b;"></div>
<svg style="left:1037.6px;top:148px;" width="18" height="18" viewBox="0 0 18 18"><path d="M1 1.200L8.600 3.400V12L1 15z" fill="none" stroke="#ffffff" stroke-width="1.100"/><path d="M1 1.200L8.600 12M8.600 3.400L1 15" stroke="#ffffff" stroke-width="0.900"/><path d="M6.200 6.200L10.800 1.800V9.600L6.200 13.400z" fill="#ffffff"/><path d="M10.800 9L15.800 7V13.600L10.800 16.200z" fill="#d0d0d0"/><path d="M10 9.600L14.400 5.800L16.400 7.200V13.800L12.400 16.600L10 14.800z" fill="none" stroke="#ffffff" stroke-width="0.900"/><path d="M8.800 11.800L12.400 10.400V16" fill="none" stroke="#ffffff" stroke-width="0.800"/></svg>
<svg style="left:1063.6px;top:148px;" width="18" height="18" viewBox="0 0 18 18"><path d="M2.200 4.200L6.400 1L16 9.400L12 14.200L2.200 15.800z" fill="#f1f1f1" stroke="#262626" stroke-width="0.900" stroke-dasharray="1.400 0.800"/><path d="M2.200 4.200V15.800H12.400L15 13L9.800 13V8.600L6.200 8.600V4.200z" fill="#262626"/><path d="M4.800 6.400V11.200H8.600" fill="none" stroke="#f1f1f1" stroke-width="1"/><path d="M6.400 1L16 9.400M8.200 2.600L5.200 5.600M10.400 4.400L7.800 7.400M12.600 6.400L10.400 9M14.600 8.200L12.400 10.800" stroke="#262626" stroke-width="0.700"/></svg>
<div style="left:1089.5px;top:145px;width:46.5px;height:25px;background:#4b4b4b;"></div>
<svg style="left:1093px;top:148px;" width="18" height="18" viewBox="0 0 18 18"><path d="M0.600 1.400H17L10.400 9.400V15.600L9.600 17H8L7.200 15.600V9.400z" fill="#ffffff"/></svg>
<svg style="left:1121.2px;top:153.8px;" width="10" height="6" viewBox="0 0 10 6"><path d="M0 0.100h10l-5 4.800z" fill="#ffffff"/></svg>
<svg style="left:1142.6px;top:147.6px;" width="18" height="18" viewBox="0 0 18 18"><path d="M2 2H16.200" stroke="#262626" stroke-width="1.600"/><path d="M3.400 2V9.400M2.200 8L3.400 9.600L4.600 8" fill="none" stroke="#262626" stroke-width="1"/><rect x="1.400" y="11.200" width="6" height="4.600" fill="#f1f1f1" stroke="#262626" stroke-width="1.100"/><path d="M1.400 13.400H7.400M4.400 11.200V15.800" stroke="#262626" stroke-width="1"/><path d="M10.800 2.600V16.200M14 2.600V16.200M9.600 16.200H15.200" stroke="#262626" stroke-width="1.300" fill="none"/><path d="M10.800 3L14 6L10.800 9L14 12L10.800 15M14 3L10.800 6L14 9L10.800 12L14 15" fill="none" stroke="#262626" stroke-width="0.800"/></svg>
<svg style="left:1171px;top:147.6px;" width="18" height="18" viewBox="0 0 18 18"><path d="M11.200 2.400C12.600 0.400 15.800 0.600 16.200 3C16.400 4.400 15.200 5.400 14 5.800L14.600 7.200L13 8.200L6 15.200L3.400 15.800L2.200 17L1.400 16.200L2.600 15L3.200 12.400L10.200 5.400L10.800 4z" fill="#d2d2d2"/></svg>
<svg style="left:360px;top:895px;" width="120" height="90" viewBox="0 0 120 90">
<defs><radialGradient id="gs" cx="0.5" cy="0.55" r="0.6"><stop offset="0" stop-color="#fbf7b0"/><stop offset="0.6" stop-color="#ede466"/><stop offset="1" stop-color="#d9cf55"/></radialGradient>
<linearGradient id="gz" x1="0" x2="1"><stop offset="0" stop-color="#4f83d6"/><stop offset="0.5" stop-color="#7ba6ea"/><stop offset="1" stop-color="#4f83d6"/></linearGradient></defs>
<path d="M50.2 72V34h3.6V72z" fill="url(#gz)"/><path d="M52 19L47.6 35h8.8z" fill="#5f92e0"/><path d="M52 21L51 34h2z" fill="#e8f0ff"/>
<path d="M58 68.6L84 61.6l1 3.2L59 73.4z" fill="#e87474"/><path d="M97.8 60.2L82.6 58.4l2.4 9.6z" fill="#df6a6a"/><rect x="82.6" y="61.4" width="3.2" height="3.4" fill="#e63c3c"/>
<path d="M47 69.6L32.6 62.4l-1.6 3L45.6 73.6z" fill="#6fb06f"/><path d="M19.8 56L33.8 57.2l-4.6 8.6z" fill="#6a9a6a"/><path d="M27.4 59.2l4-2.4 2.6 4.4-4 2.6z" fill="#2e9a3a"/><path d="M25.6 61l3.6-4.6M27 64.6l3.8 0.6" stroke="#74d274" stroke-width="1.2" fill="none"/>
<circle cx="51.9" cy="71.4" r="6.6" fill="url(#gs)"/>
<text x="48" y="15.800" font-family="Liberation Sans, sans-serif" font-size="11.500" fill="#4d7de0">Z</text>
<text x="100" y="64" font-family="Liberation Sans, sans-serif" font-size="11.500" fill="#e84848">X</text>
<text x="11.600" y="58.400" font-family="Liberation Sans, sans-serif" font-size="11.500" fill="#58c468">Y</text></svg>
<svg style="left:960px;top:190px" width="180" height="820" viewBox="960 190 180 820"><defs>
<linearGradient id="colg" gradientUnits="userSpaceOnUse" x1="1036" x2="1062"><stop offset="0" stop-color="#080000"/><stop offset="0.120" stop-color="#220000"/><stop offset="0.250" stop-color="#4c0000"/><stop offset="0.450" stop-color="#7c0000"/><stop offset="0.680" stop-color="#9c0000"/><stop offset="0.900" stop-color="#ac0000"/><stop offset="1" stop-color="#a80000"/></linearGradient>
<linearGradient id="pipeg" gradientUnits="userSpaceOnUse" x1="1060.4" x2="1068.2"><stop offset="0" stop-color="#3a0000"/><stop offset="0.300" stop-color="#9a0000"/><stop offset="0.720" stop-color="#d60000"/><stop offset="1" stop-color="#a40000"/></linearGradient>
<linearGradient id="pipe2g" gradientUnits="userSpaceOnUse" x1="1076" x2="1081"><stop offset="0" stop-color="#6a0000"/><stop offset="0.5" stop-color="#e00000"/><stop offset="1" stop-color="#7a0000"/></linearGradient>
<linearGradient id="postg" gradientUnits="userSpaceOnUse" x1="1021.600" x2="1028"><stop offset="0" stop-color="#d87c00"/><stop offset="0.45" stop-color="#ff9c00"/><stop offset="0.8" stop-color="#ffd000"/><stop offset="1" stop-color="#f0a800"/></linearGradient>
<pattern id="mesh" width="2" height="2" patternUnits="userSpaceOnUse"><rect width="2" height="2" fill="#f4e4e4"/><rect width="1" height="1" fill="#c80000"/><rect x="1" y="1" width="1" height="1" fill="#c80000"/></pattern>
</defs><rect x="1021.600" y="205" width="6.300" height="146" fill="url(#postg)" stroke="#3a2400" stroke-width="0.700"/><ellipse cx="1024.900" cy="204.300" rx="3.900" ry="1.500" fill="#ffc020" stroke="#3a2400" stroke-width="0.700"/><polyline points="1024.5,210.5 1068.0,230.0" fill="none" stroke="#2a1a00" stroke-width="6.2" stroke-linecap="butt" stroke-linejoin="round"/><polyline points="1024.5,210.5 1068.0,230.0" fill="none" stroke="#f08a00" stroke-width="4.8" stroke-linecap="butt" stroke-linejoin="round"/><polyline points="1027.5,240.0 1056.0,227.5" fill="none" stroke="#2a1a00" stroke-width="5.4" stroke-linecap="butt" stroke-linejoin="round"/><polyline points="1027.5,240.0 1056.0,227.5" fill="none" stroke="#e88200" stroke-width="4.0" stroke-linecap="butt" stroke-linejoin="round"/><rect x="1022.600" y="236.500" width="5.800" height="9.500" fill="#ffb400" stroke="#3a2400" stroke-width="0.700"/><rect x="1065.400" y="227.800" width="5.200" height="11" rx="2.200" fill="#ffc000" stroke="#3a2400" stroke-width="0.700"/><polyline points="1068.2,239.0 1067.2,243.5 1068.8,247.5" fill="none" stroke="#141414" stroke-width="2.2" stroke-linecap="butt" stroke-linejoin="round"/><polygon points="991.6,326.8 999.3,313.6 1035.9,303.9 1081.3,306.5 1107.2,319.7 1103.2,326.1 1074.6,323.3 1041.0,340.5 1017.6,340.1" fill="#8e0000"/><polygon points="991.6,319.3 999.3,306.1 999.3,313.6 991.6,326.8" fill="#a80000" stroke="#300000" stroke-width="0.6" stroke-linejoin="round"/><polygon points="999.3,306.1 1035.9,296.4 1035.9,303.9 999.3,313.6" fill="#dc0000" stroke="#300000" stroke-width="0.6" stroke-linejoin="round"/><polygon points="1035.9,296.4 1081.3,299.0 1081.3,306.5 1035.9,303.9" fill="#c80000" stroke="#300000" stroke-width="0.6" stroke-linejoin="round"/><polygon points="1081.3,299.0 1107.2,312.2 1107.2,320.7 1081.3,306.5" fill="#2e0000" stroke="#200000" stroke-width="0.6" stroke-linejoin="round"/><polygon points="999.3,313.6 1035.9,303.9 1030.0,312.9 1001.0,321.6" fill="#d40000"/><polygon points="1077.7,310.5 1098.0,314.5 1098.0,319.8 1077.7,318.8" fill="#b00000"/><polygon points="1077.7,318.6 1098.0,319.6 1102.0,325.7 1077.7,323.8" fill="url(#mesh)"/><polygon points="998.5,320.8 1003.0,322.6 1032.0,312.9 1060.0,315.9 1060.0,334.5 1040.0,338.5 1018.0,338.1" fill="url(#mesh)"/><polyline points="1003.0,321.8 1040.0,332.5 1060.0,317.9" fill="none" stroke="#a00000" stroke-width="1.6" stroke-linecap="butt" stroke-linejoin="round"/><polyline points="1018.0,337.1 1046.0,315.9" fill="none" stroke="#a00000" stroke-width="1.6" stroke-linecap="butt" stroke-linejoin="round"/><polyline points="999.3,255.1 999.3,306.1" fill="none" stroke="#1a0000" stroke-width="2.4" stroke-linecap="butt" stroke-linejoin="round"/><polyline points="999.3,255.1 999.3,306.1" fill="none" stroke="#a00000" stroke-width="0.6000000000000001" stroke-linecap="butt" stroke-linejoin="round"/><polyline points="1035.9,245.4 1035.9,296.4" fill="none" stroke="#1a0000" stroke-width="2.4" stroke-linecap="butt" stroke-linejoin="round"/><polyline points="1035.9,245.4 1035.9,296.4" fill="none" stroke="#a00000" stroke-width="0.6000000000000001" stroke-linecap="butt" stroke-linejoin="round"/><polyline points="1081.3,248.0 1081.3,299.0" fill="none" stroke="#1a0000" stroke-width="2.4" stroke-linecap="butt" stroke-linejoin="round"/><polyline points="1081.3,248.0 1081.3,299.0" fill="none" stroke="#a00000" stroke-width="0.6000000000000001" stroke-linecap="butt" stroke-linejoin="round"/><polyline points="1107.2,261.2 1107.2,312.2" fill="none" stroke="#1a0000" stroke-width="2.4" stroke-linecap="butt" stroke-linejoin="round"/><polyline points="1107.2,261.2 1107.2,312.2" fill="none" stroke="#a00000" stroke-width="0.6000000000000001" stroke-linecap="butt" stroke-linejoin="round"/><polyline points="991.6,268.3 999.3,255.1 1035.9,245.4 1081.3,248.0 1107.2,261.2" fill="none" stroke="#1a0000" stroke-width="2.6" stroke-linecap="butt" stroke-linejoin="round"/><polyline points="991.6,268.3 999.3,255.1 1035.9,245.4 1081.3,248.0 1107.2,261.2" fill="none" stroke="#a00000" stroke-width="0.8000000000000003" stroke-linecap="butt" stroke-linejoin="round"/><polyline points="991.6,293.8 999.3,280.6 1035.9,270.9 1081.3,273.5 1107.2,286.7" fill="none" stroke="#1a0000" stroke-width="2.4" stroke-linecap="butt" stroke-linejoin="round"/><polyline points="991.6,293.8 999.3,280.6 1035.9,270.9 1081.3,273.5 1107.2,286.7" fill="none" stroke="#a00000" stroke-width="0.6000000000000001" stroke-linecap="butt" stroke-linejoin="round"/><path d="M1036 338V972.500Q1048.500 977 1061.200 972.500V338z" fill="url(#colg)"/><path d="M1036.200 421Q1048.500 425.5 1061 421" fill="none" stroke="#2a0000" stroke-width="0.900"/><path d="M1036.200 660Q1048.500 664.5 1061 660" fill="none" stroke="#2a0000" stroke-width="0.900"/><path d="M1036.200 900Q1048.500 904.5 1061 900" fill="none" stroke="#2a0000" stroke-width="0.900"/><polygon points="1049.7,358.0 1060.4,360.0 1060.4,364.5 1049.7,362.5" fill="#6e0000" stroke="#2a0000" stroke-width="0.6" stroke-linejoin="round"/><polygon points="1049.7,407.0 1060.4,409.0 1060.4,413.5 1049.7,411.5" fill="#6e0000" stroke="#2a0000" stroke-width="0.6" stroke-linejoin="round"/><polygon points="1049.7,454.0 1060.4,456.0 1060.4,460.5 1049.7,458.5" fill="#6e0000" stroke="#2a0000" stroke-width="0.6" stroke-linejoin="round"/><polygon points="1049.7,548.0 1060.4,550.0 1060.4,554.5 1049.7,552.5" fill="#6e0000" stroke="#2a0000" stroke-width="0.6" stroke-linejoin="round"/><polygon points="1049.7,595.5 1060.4,597.5 1060.4,602.0 1049.7,600.0" fill="#6e0000" stroke="#2a0000" stroke-width="0.6" stroke-linejoin="round"/><polygon points="1049.7,643.0 1060.4,645.0 1060.4,649.5 1049.7,647.5" fill="#6e0000" stroke="#2a0000" stroke-width="0.6" stroke-linejoin="round"/><polygon points="1049.7,690.0 1060.4,692.0 1060.4,696.5 1049.7,694.5" fill="#6e0000" stroke="#2a0000" stroke-width="0.6" stroke-linejoin="round"/><polygon points="1049.7,738.0 1060.4,740.0 1060.4,744.5 1049.7,742.5" fill="#6e0000" stroke="#2a0000" stroke-width="0.6" stroke-linejoin="round"/><polygon points="1049.7,833.0 1060.4,835.0 1060.4,839.5 1049.7,837.5" fill="#6e0000" stroke="#2a0000" stroke-width="0.6" stroke-linejoin="round"/><polygon points="1049.7,881.0 1060.4,883.0 1060.4,887.5 1049.7,885.5" fill="#6e0000" stroke="#2a0000" stroke-width="0.6" stroke-linejoin="round"/><polygon points="1049.7,928.0 1060.4,930.0 1060.4,934.5 1049.7,932.5" fill="#6e0000" stroke="#2a0000" stroke-width="0.6" stroke-linejoin="round"/><polyline points="1042.5,573.6 1051.5,571.0" fill="none" stroke="#2a0000" stroke-width="1.8" stroke-linecap="butt" stroke-linejoin="round"/><polyline points="1042.5,598.6 1051.5,596.0" fill="none" stroke="#2a0000" stroke-width="1.8" stroke-linecap="butt" stroke-linejoin="round"/><polyline points="1042.5,622.6 1051.5,620.0" fill="none" stroke="#2a0000" stroke-width="1.8" stroke-linecap="butt" stroke-linejoin="round"/><polyline points="1042.5,645.6 1051.5,643.0" fill="none" stroke="#2a0000" stroke-width="1.8" stroke-linecap="butt" stroke-linejoin="round"/><polyline points="1042.5,668.6 1051.5,666.0" fill="none" stroke="#2a0000" stroke-width="1.8" stroke-linecap="butt" stroke-linejoin="round"/><polyline points="1042.5,692.6 1051.5,690.0" fill="none" stroke="#2a0000" stroke-width="1.8" stroke-linecap="butt" stroke-linejoin="round"/><polyline points="1042.5,716.6 1051.5,714.0" fill="none" stroke="#2a0000" stroke-width="1.8" stroke-linecap="butt" stroke-linejoin="round"/><polyline points="1042.5,739.6 1051.5,737.0" fill="none" stroke="#2a0000" stroke-width="1.8" stroke-linecap="butt" stroke-linejoin="round"/><rect x="1021.600" y="349" width="6.300" height="47" fill="url(#postg)" stroke="#3a2400" stroke-width="0.700"/><polygon points="1014.3,350.0 1021.0,345.5 1036.5,349.0 1036.5,353.5" fill="#ffb000" stroke="#2a1a00" stroke-width="0.8" stroke-linejoin="round"/><polygon points="1014.3,350.0 1032.0,353.8 1032.0,370.5 1030.5,369.5" fill="#ff8c00" stroke="#2a1a00" stroke-width="0.8" stroke-linejoin="round"/><polygon points="1032.0,353.8 1036.5,352.5 1036.5,370.0 1032.0,370.5" fill="#ffa000" stroke="#2a1a00" stroke-width="0.8" stroke-linejoin="round"/><polygon points="1014.3,398.5 1021.0,394.0 1036.5,397.5 1036.5,402.0" fill="#ffb000" stroke="#2a1a00" stroke-width="0.8" stroke-linejoin="round"/><polygon points="1014.3,398.5 1032.0,402.3 1032.0,419.0 1030.5,418.0" fill="#ff8c00" stroke="#2a1a00" stroke-width="0.8" stroke-linejoin="round"/><polygon points="1032.0,402.3 1036.5,401.0 1036.5,418.5 1032.0,419.0" fill="#ffa000" stroke="#2a1a00" stroke-width="0.8" stroke-linejoin="round"/><rect x="1021.600" y="338" width="6.300" height="10.500" fill="url(#postg)" stroke="#3a2400" stroke-width="0.700"/><polyline points="1073.6,329.0 1073.6,438.0" fill="none" stroke="#200000" stroke-width="2.1" stroke-linecap="butt" stroke-linejoin="round"/><polyline points="1073.6,329.0 1073.6,438.0" fill="none" stroke="#a00000" stroke-width="0.5" stroke-linecap="butt" stroke-linejoin="round"/><polyline points="1080.7,329.0 1080.7,438.0" fill="none" stroke="#200000" stroke-width="2.1" stroke-linecap="butt" stroke-linejoin="round"/><polyline points="1080.7,329.0 1080.7,438.0" fill="none" stroke="#a00000" stroke-width="0.5" stroke-linecap="butt" stroke-linejoin="round"/><polyline points="1087.0,329.0 1087.0,438.0" fill="none" stroke="#200000" stroke-width="2.1" stroke-linecap="butt" stroke-linejoin="round"/><polyline points="1087.0,329.0 1087.0,438.0" fill="none" stroke="#a00000" stroke-width="0.5" stroke-linecap="butt" stroke-linejoin="round"/><polyline points="1093.0,329.0 1093.0,438.0" fill="none" stroke="#200000" stroke-width="2.1" stroke-linecap="butt" stroke-linejoin="round"/><polyline points="1093.0,329.0 1093.0,438.0" fill="none" stroke="#a00000" stroke-width="0.5" stroke-linecap="butt" stroke-linejoin="round"/><polyline points="1095.8,329.0 1095.8,438.0" fill="none" stroke="#200000" stroke-width="2.1" stroke-linecap="butt" stroke-linejoin="round"/><polyline points="1095.8,329.0 1095.8,438.0" fill="none" stroke="#a00000" stroke-width="0.5" stroke-linecap="butt" stroke-linejoin="round"/><ellipse cx="1082.5" cy="360.5" rx="13.5" ry="5.4" fill="none" stroke="#3a0000" stroke-width="2"/><ellipse cx="1082.5" cy="360.5" rx="13.5" ry="5.4" fill="none" stroke="#c00000" stroke-width="0.9"/><ellipse cx="1082.5" cy="399.0" rx="13.5" ry="5.4" fill="none" stroke="#3a0000" stroke-width="2"/><ellipse cx="1082.5" cy="399.0" rx="13.5" ry="5.4" fill="none" stroke="#c00000" stroke-width="0.9"/><ellipse cx="1082.5" cy="437.5" rx="13.5" ry="5.4" fill="none" stroke="#3a0000" stroke-width="2"/><ellipse cx="1082.5" cy="437.5" rx="13.5" ry="5.4" fill="none" stroke="#c00000" stroke-width="0.9"/><polyline points="1068.8,342.0 1073.0,343.5" fill="none" stroke="#3a0000" stroke-width="1.6" stroke-linecap="butt" stroke-linejoin="round"/><polyline points="1068.8,353.2 1073.0,354.7" fill="none" stroke="#3a0000" stroke-width="1.6" stroke-linecap="butt" stroke-linejoin="round"/><polyline points="1068.8,364.4 1073.0,365.9" fill="none" stroke="#3a0000" stroke-width="1.6" stroke-linecap="butt" stroke-linejoin="round"/><polyline points="1068.8,375.6 1073.0,377.1" fill="none" stroke="#3a0000" stroke-width="1.6" stroke-linecap="butt" stroke-linejoin="round"/><polyline points="1068.8,386.8 1073.0,388.3" fill="none" stroke="#3a0000" stroke-width="1.6" stroke-linecap="butt" stroke-linejoin="round"/><polyline points="1068.8,398.0 1073.0,399.5" fill="none" stroke="#3a0000" stroke-width="1.6" stroke-linecap="butt" stroke-linejoin="round"/><polyline points="1068.8,409.2 1073.0,410.7" fill="none" stroke="#3a0000" stroke-width="1.6" stroke-linecap="butt" stroke-linejoin="round"/><polyline points="1068.8,420.4 1073.0,421.9" fill="none" stroke="#3a0000" stroke-width="1.6" stroke-linecap="butt" stroke-linejoin="round"/><polyline points="1068.8,431.6 1073.0,433.1" fill="none" stroke="#3a0000" stroke-width="1.6" stroke-linecap="butt" stroke-linejoin="round"/><polyline points="1068.8,442.8 1073.0,444.3" fill="none" stroke="#3a0000" stroke-width="1.6" stroke-linecap="butt" stroke-linejoin="round"/><polyline points="1068.8,454.0 1073.0,455.5" fill="none" stroke="#3a0000" stroke-width="1.6" stroke-linecap="butt" stroke-linejoin="round"/><polyline points="1068.8,465.2 1073.0,466.7" fill="none" stroke="#3a0000" stroke-width="1.6" stroke-linecap="butt" stroke-linejoin="round"/><polyline points="1068.8,476.4 1073.0,477.9" fill="none" stroke="#3a0000" stroke-width="1.6" stroke-linecap="butt" stroke-linejoin="round"/><polyline points="1068.8,487.6 1073.0,489.1" fill="none" stroke="#3a0000" stroke-width="1.6" stroke-linecap="butt" stroke-linejoin="round"/><polyline points="1068.8,338.0 1068.8,492.0" fill="none" stroke="#1e0000" stroke-width="2" stroke-linecap="butt" stroke-linejoin="round"/><polyline points="1073.0,338.0 1073.0,492.0" fill="none" stroke="#1e0000" stroke-width="2" stroke-linecap="butt" stroke-linejoin="round"/><polyline points="1004.8,577.0 1004.8,687.0" fill="none" stroke="#200000" stroke-width="2.1" stroke-linecap="butt" stroke-linejoin="round"/><polyline points="1004.8,577.0 1004.8,687.0" fill="none" stroke="#a00000" stroke-width="0.5" stroke-linecap="butt" stroke-linejoin="round"/><polyline points="1010.5,577.0 1010.5,687.0" fill="none" stroke="#200000" stroke-width="2.1" stroke-linecap="butt" stroke-linejoin="round"/><polyline points="1010.5,577.0 1010.5,687.0" fill="none" stroke="#a00000" stroke-width="0.5" stroke-linecap="butt" stroke-linejoin="round"/><polyline points="1017.6,577.0 1017.6,687.0" fill="none" stroke="#200000" stroke-width="2.1" stroke-linecap="butt" stroke-linejoin="round"/><polyline points="1017.6,577.0 1017.6,687.0" fill="none" stroke="#a00000" stroke-width="0.5" stroke-linecap="butt" stroke-linejoin="round"/><polyline points="1026.8,577.0 1026.8,687.0" fill="none" stroke="#200000" stroke-width="2.1" stroke-linecap="butt" stroke-linejoin="round"/><polyline points="1026.8,577.0 1026.8,687.0" fill="none" stroke="#a00000" stroke-width="0.5" stroke-linecap="butt" stroke-linejoin="round"/><polyline points="1031.0,577.0 1031.0,687.0" fill="none" stroke="#200000" stroke-width="2.1" stroke-linecap="butt" stroke-linejoin="round"/><polyline points="1031.0,577.0 1031.0,687.0" fill="none" stroke="#a00000" stroke-width="0.5" stroke-linecap="butt" stroke-linejoin="round"/><ellipse cx="1020.8" cy="610.7" rx="17.2" ry="5.4" fill="none" stroke="#3a0000" stroke-width="2"/><ellipse cx="1020.8" cy="610.7" rx="17.2" ry="5.4" fill="none" stroke="#c00000" stroke-width="0.9"/><ellipse cx="1020.8" cy="648.6" rx="17.2" ry="5.4" fill="none" stroke="#3a0000" stroke-width="2"/><ellipse cx="1020.8" cy="648.6" rx="17.2" ry="5.4" fill="none" stroke="#c00000" stroke-width="0.9"/><ellipse cx="1020.8" cy="686.5" rx="17.2" ry="5.4" fill="none" stroke="#3a0000" stroke-width="2"/><ellipse cx="1020.8" cy="686.5" rx="17.2" ry="5.4" fill="none" stroke="#c00000" stroke-width="0.9"/><polyline points="1027.5,581.0 1038.5,585.5" fill="none" stroke="#3a0000" stroke-width="1.6" stroke-linecap="butt" stroke-linejoin="round"/><polyline points="1027.5,592.8 1038.5,597.3" fill="none" stroke="#3a0000" stroke-width="1.6" stroke-linecap="butt" stroke-linejoin="round"/><polyline points="1027.5,604.6 1038.5,609.1" fill="none" stroke="#3a0000" stroke-width="1.6" stroke-linecap="butt" stroke-linejoin="round"/><polyline points="1027.5,616.4 1038.5,620.9" fill="none" stroke="#3a0000" stroke-width="1.6" stroke-linecap="butt" stroke-linejoin="round"/><polyline points="1027.5,628.2 1038.5,632.7" fill="none" stroke="#3a0000" stroke-width="1.6" stroke-linecap="butt" stroke-linejoin="round"/><polyline points="1027.5,640.0 1038.5,644.5" fill="none" stroke="#3a0000" stroke-width="1.6" stroke-linecap="butt" stroke-linejoin="round"/><polyline points="1027.5,651.8 1038.5,656.3" fill="none" stroke="#3a0000" stroke-width="1.6" stroke-linecap="butt" stroke-linejoin="round"/><polyline points="1027.5,663.6 1038.5,668.1" fill="none" stroke="#3a0000" stroke-width="1.6" stroke-linecap="butt" stroke-linejoin="round"/><polyline points="1027.5,675.4 1038.5,679.9" fill="none" stroke="#3a0000" stroke-width="1.6" stroke-linecap="butt" stroke-linejoin="round"/><polyline points="1027.5,687.2 1038.5,691.7" fill="none" stroke="#3a0000" stroke-width="1.6" stroke-linecap="butt" stroke-linejoin="round"/><polyline points="1027.5,699.0 1038.5,703.5" fill="none" stroke="#3a0000" stroke-width="1.6" stroke-linecap="butt" stroke-linejoin="round"/><polyline points="1027.5,710.8 1038.5,715.3" fill="none" stroke="#3a0000" stroke-width="1.6" stroke-linecap="butt" stroke-linejoin="round"/><polyline points="1027.5,722.6 1038.5,727.1" fill="none" stroke="#3a0000" stroke-width="1.6" stroke-linecap="butt" stroke-linejoin="round"/><polyline points="1027.5,734.4 1038.5,738.9" fill="none" stroke="#3a0000" stroke-width="1.6" stroke-linecap="butt" stroke-linejoin="round"/><polyline points="1027.5,746.2 1038.5,750.7" fill="none" stroke="#3a0000" stroke-width="1.6" stroke-linecap="butt" stroke-linejoin="round"/><polyline points="1027.5,758.0 1038.5,762.5" fill="none" stroke="#3a0000" stroke-width="1.6" stroke-linecap="butt" stroke-linejoin="round"/><polyline points="1027.5,769.8 1038.5,774.3" fill="none" stroke="#3a0000" stroke-width="1.6" stroke-linecap="butt" stroke-linejoin="round"/><polyline points="1027.5,577.0 1027.5,778.0" fill="none" stroke="#1e0000" stroke-width="2" stroke-linecap="butt" stroke-linejoin="round"/><polyline points="1038.5,577.0 1038.5,778.0" fill="none" stroke="#1e0000" stroke-width="2" stroke-linecap="butt" stroke-linejoin="round"/><polyline points="1073.6,803.0 1073.6,854.0" fill="none" stroke="#200000" stroke-width="2.1" stroke-linecap="butt" stroke-linejoin="round"/><polyline points="1073.6,803.0 1073.6,854.0" fill="none" stroke="#a00000" stroke-width="0.5" stroke-linecap="butt" stroke-linejoin="round"/><polyline points="1080.7,803.0 1080.7,854.0" fill="none" stroke="#200000" stroke-width="2.1" stroke-linecap="butt" stroke-linejoin="round"/><polyline points="1080.7,803.0 1080.7,854.0" fill="none" stroke="#a00000" stroke-width="0.5" stroke-linecap="butt" stroke-linejoin="round"/><polyline points="1087.0,803.0 1087.0,854.0" fill="none" stroke="#200000" stroke-width="2.1" stroke-linecap="butt" stroke-linejoin="round"/><polyline points="1087.0,803.0 1087.0,854.0" fill="none" stroke="#a00000" stroke-width="0.5" stroke-linecap="butt" stroke-linejoin="round"/><polyline points="1093.0,803.0 1093.0,854.0" fill="none" stroke="#200000" stroke-width="2.1" stroke-linecap="butt" stroke-linejoin="round"/><polyline points="1093.0,803.0 1093.0,854.0" fill="none" stroke="#a00000" stroke-width="0.5" stroke-linecap="butt" stroke-linejoin="round"/><polyline points="1095.8,803.0 1095.8,854.0" fill="none" stroke="#200000" stroke-width="2.1" stroke-linecap="butt" stroke-linejoin="round"/><polyline points="1095.8,803.0 1095.8,854.0" fill="none" stroke="#a00000" stroke-width="0.5" stroke-linecap="butt" stroke-linejoin="round"/><ellipse cx="1082.5" cy="854.0" rx="13.5" ry="5.4" fill="none" stroke="#3a0000" stroke-width="2"/><ellipse cx="1082.5" cy="854.0" rx="13.5" ry="5.4" fill="none" stroke="#c00000" stroke-width="0.9"/><polyline points="1068.8,816.0 1073.0,817.5" fill="none" stroke="#3a0000" stroke-width="1.6" stroke-linecap="butt" stroke-linejoin="round"/><polyline points="1068.8,827.2 1073.0,828.7" fill="none" stroke="#3a0000" stroke-width="1.6" stroke-linecap="butt" stroke-linejoin="round"/><polyline points="1068.8,838.4 1073.0,839.9" fill="none" stroke="#3a0000" stroke-width="1.6" stroke-linecap="butt" stroke-linejoin="round"/><polyline points="1068.8,849.6 1073.0,851.1" fill="none" stroke="#3a0000" stroke-width="1.6" stroke-linecap="butt" stroke-linejoin="round"/><polyline points="1068.8,860.8 1073.0,862.3" fill="none" stroke="#3a0000" stroke-width="1.6" stroke-linecap="butt" stroke-linejoin="round"/><polyline points="1068.8,872.0 1073.0,873.5" fill="none" stroke="#3a0000" stroke-width="1.6" stroke-linecap="butt" stroke-linejoin="round"/><polyline points="1068.8,883.2 1073.0,884.7" fill="none" stroke="#3a0000" stroke-width="1.6" stroke-linecap="butt" stroke-linejoin="round"/><polyline points="1068.8,894.4 1073.0,895.9" fill="none" stroke="#3a0000" stroke-width="1.6" stroke-linecap="butt" stroke-linejoin="round"/><polyline points="1068.8,905.6 1073.0,907.1" fill="none" stroke="#3a0000" stroke-width="1.6" stroke-linecap="butt" stroke-linejoin="round"/><polyline points="1068.8,916.8 1073.0,918.3" fill="none" stroke="#3a0000" stroke-width="1.6" stroke-linecap="butt" stroke-linejoin="round"/><polyline points="1068.8,928.0 1073.0,929.5" fill="none" stroke="#3a0000" stroke-width="1.6" stroke-linecap="butt" stroke-linejoin="round"/><polyline points="1068.8,939.2 1073.0,940.7" fill="none" stroke="#3a0000" stroke-width="1.6" stroke-linecap="butt" stroke-linejoin="round"/><polyline points="1068.8,950.4 1073.0,951.9" fill="none" stroke="#3a0000" stroke-width="1.6" stroke-linecap="butt" stroke-linejoin="round"/><polyline points="1068.8,812.0 1068.8,956.0" fill="none" stroke="#1e0000" stroke-width="2" stroke-linecap="butt" stroke-linejoin="round"/><polyline points="1073.0,812.0 1073.0,956.0" fill="none" stroke="#1e0000" stroke-width="2" stroke-linecap="butt" stroke-linejoin="round"/><rect x="1060.400" y="288" width="7.800" height="658" fill="url(#pipeg)"/><path d="M1060.600 288V946M1068.100 288V946" stroke="#2a0000" stroke-width="0.800" fill="none"/><rect x="1059.400" y="334" width="9.800" height="3.400" rx="1" fill="#a00000" stroke="#2a0000" stroke-width="0.700"/><rect x="1059.400" y="356" width="9.800" height="3.400" rx="1" fill="#a00000" stroke="#2a0000" stroke-width="0.700"/><rect x="1059.400" y="378" width="9.800" height="3.400" rx="1" fill="#a00000" stroke="#2a0000" stroke-width="0.700"/><rect x="1059.400" y="427" width="9.800" height="3.400" rx="1" fill="#a00000" stroke="#2a0000" stroke-width="0.700"/><rect x="1059.400" y="521" width="9.800" height="3.400" rx="1" fill="#a00000" stroke="#2a0000" stroke-width="0.700"/><rect x="1059.400" y="709" width="9.800" height="3.400" rx="1" fill="#a00000" stroke="#2a0000" stroke-width="0.700"/><rect x="1059.400" y="768" width="9.800" height="3.400" rx="1" fill="#a00000" stroke="#2a0000" stroke-width="0.700"/><rect x="1059.400" y="866" width="9.800" height="3.400" rx="1" fill="#a00000" stroke="#2a0000" stroke-width="0.700"/><rect x="1059.400" y="904" width="9.800" height="3.400" rx="1" fill="#a00000" stroke="#2a0000" stroke-width="0.700"/><path d="M1064.300 944C1064.300 952 1068 956 1075.500 959" fill="none" stroke="#2a0000" stroke-width="8.200"/><path d="M1064.300 944C1064.300 952 1068 956 1075.500 959" fill="none" stroke="#d40000" stroke-width="6.400"/><ellipse cx="1077.200" cy="959.800" rx="4.600" ry="6.600" transform="rotate(22 1077.200 959.800)" fill="#8a0000" stroke="#200000" stroke-width="0.900"/><ellipse cx="1076.700" cy="960" rx="2.500" ry="3.800" transform="rotate(22 1076.700 960)" fill="#262626"/><polyline points="1064.6,597.0 1071.5,593.0" fill="none" stroke="#2a0000" stroke-width="2.6" stroke-linecap="butt" stroke-linejoin="round"/><polyline points="1065.2,596.6 1070.8,593.4" fill="none" stroke="#a00000" stroke-width="1.1" stroke-linecap="butt" stroke-linejoin="round"/><polyline points="1064.6,620.0 1071.5,616.0" fill="none" stroke="#2a0000" stroke-width="2.6" stroke-linecap="butt" stroke-linejoin="round"/><polyline points="1065.2,619.6 1070.8,616.4" fill="none" stroke="#a00000" stroke-width="1.1" stroke-linecap="butt" stroke-linejoin="round"/><polyline points="1064.6,644.0 1071.5,640.0" fill="none" stroke="#2a0000" stroke-width="2.6" stroke-linecap="butt" stroke-linejoin="round"/><polyline points="1065.2,643.6 1070.8,640.4" fill="none" stroke="#a00000" stroke-width="1.1" stroke-linecap="butt" stroke-linejoin="round"/><polyline points="1064.6,668.0 1071.5,664.0" fill="none" stroke="#2a0000" stroke-width="2.6" stroke-linecap="butt" stroke-linejoin="round"/><polyline points="1065.2,667.6 1070.8,664.4" fill="none" stroke="#a00000" stroke-width="1.1" stroke-linecap="butt" stroke-linejoin="round"/><polyline points="1064.6,692.0 1071.5,688.0" fill="none" stroke="#2a0000" stroke-width="2.6" stroke-linecap="butt" stroke-linejoin="round"/><polyline points="1065.2,691.6 1070.8,688.4" fill="none" stroke="#a00000" stroke-width="1.1" stroke-linecap="butt" stroke-linejoin="round"/><polyline points="1064.6,740.0 1071.5,736.0" fill="none" stroke="#2a0000" stroke-width="2.6" stroke-linecap="butt" stroke-linejoin="round"/><polyline points="1065.2,739.6 1070.8,736.4" fill="none" stroke="#a00000" stroke-width="1.1" stroke-linecap="butt" stroke-linejoin="round"/><rect x="1076.300" y="664" width="4.600" height="98" fill="url(#pipe2g)" stroke="#2a0000" stroke-width="0.600"/><path d="M1078.600 760C1078.600 768 1074 768 1067 768" fill="none" stroke="#2a0000" stroke-width="5.800"/><path d="M1078.600 760C1078.600 768 1074 768 1067 768" fill="none" stroke="#c80000" stroke-width="4.200"/><rect x="1065" y="708.500" width="13.500" height="5" rx="1.500" fill="#a00000" stroke="#2a0000" stroke-width="0.700"/><rect x="1074.500" y="757" width="8.500" height="3.400" rx="1" fill="#8a0000" stroke="#2a0000" stroke-width="0.700"/><polygon points="991.6,564.5 999.3,551.3 1035.9,541.6 1081.3,544.2 1107.2,557.4 1103.2,563.8 1074.6,561.0 1041.0,578.2 1017.6,577.8" fill="#8e0000"/><polygon points="991.6,557.0 999.3,543.8 999.3,551.3 991.6,564.5" fill="#a80000" stroke="#300000" stroke-width="0.6" stroke-linejoin="round"/><polygon points="999.3,543.8 1035.9,534.1 1035.9,541.6 999.3,551.3" fill="#dc0000" stroke="#300000" stroke-width="0.6" stroke-linejoin="round"/><polygon points="1035.9,534.1 1081.3,536.7 1081.3,544.2 1035.9,541.6" fill="#c80000" stroke="#300000" stroke-width="0.6" stroke-linejoin="round"/><polygon points="1081.3,536.7 1107.2,549.9 1107.2,558.4 1081.3,544.2" fill="#2e0000" stroke="#200000" stroke-width="0.6" stroke-linejoin="round"/><polygon points="999.3,551.3 1035.9,541.6 1030.0,550.6 1001.0,559.3" fill="#d40000"/><polygon points="1077.7,548.2 1098.0,552.2 1098.0,557.5 1077.7,556.5" fill="#b00000"/><polygon points="1077.7,556.3 1098.0,557.3 1102.0,563.4 1077.7,561.5" fill="url(#mesh)"/><polygon points="998.5,558.5 1003.0,560.3 1032.0,550.6 1060.0,553.6 1060.0,572.2 1040.0,576.2 1018.0,575.8" fill="url(#mesh)"/><polyline points="1003.0,559.5 1040.0,570.2 1060.0,555.6" fill="none" stroke="#a00000" stroke-width="1.6" stroke-linecap="butt" stroke-linejoin="round"/><polyline points="1018.0,574.8 1046.0,553.6" fill="none" stroke="#a00000" stroke-width="1.6" stroke-linecap="butt" stroke-linejoin="round"/><polyline points="999.3,492.8 999.3,543.8" fill="none" stroke="#1a0000" stroke-width="2.4" stroke-linecap="butt" stroke-linejoin="round"/><polyline points="999.3,492.8 999.3,543.8" fill="none" stroke="#a00000" stroke-width="0.6000000000000001" stroke-linecap="butt" stroke-linejoin="round"/><polyline points="1035.9,483.1 1035.9,534.1" fill="none" stroke="#1a0000" stroke-width="2.4" stroke-linecap="butt" stroke-linejoin="round"/><polyline points="1035.9,483.1 1035.9,534.1" fill="none" stroke="#a00000" stroke-width="0.6000000000000001" stroke-linecap="butt" stroke-linejoin="round"/><polyline points="1081.3,485.7 1081.3,536.7" fill="none" stroke="#1a0000" stroke-width="2.4" stroke-linecap="butt" stroke-linejoin="round"/><polyline points="1081.3,485.7 1081.3,536.7" fill="none" stroke="#a00000" stroke-width="0.6000000000000001" stroke-linecap="butt" stroke-linejoin="round"/><polyline points="1107.2,498.9 1107.2,549.9" fill="none" stroke="#1a0000" stroke-width="2.4" stroke-linecap="butt" stroke-linejoin="round"/><polyline points="1107.2,498.9 1107.2,549.9" fill="none" stroke="#a00000" stroke-width="0.6000000000000001" stroke-linecap="butt" stroke-linejoin="round"/><polyline points="991.6,506.0 999.3,492.8 1035.9,483.1 1081.3,485.7 1107.2,498.9" fill="none" stroke="#1a0000" stroke-width="2.6" stroke-linecap="butt" stroke-linejoin="round"/><polyline points="991.6,506.0 999.3,492.8 1035.9,483.1 1081.3,485.7 1107.2,498.9" fill="none" stroke="#a00000" stroke-width="0.8000000000000003" stroke-linecap="butt" stroke-linejoin="round"/><polyline points="991.6,531.5 999.3,518.3 1035.9,508.6 1081.3,511.2 1107.2,524.4" fill="none" stroke="#1a0000" stroke-width="2.4" stroke-linecap="butt" stroke-linejoin="round"/><polyline points="991.6,531.5 999.3,518.3 1035.9,508.6 1081.3,511.2 1107.2,524.4" fill="none" stroke="#a00000" stroke-width="0.6000000000000001" stroke-linecap="butt" stroke-linejoin="round"/><rect x="1036" y="481.1" width="25.200" height="94.5" fill="url(#colg)"/><polygon points="1045.0,511.7 1060.4,506.7 1060.4,572.2 1045.0,578.2" fill="#b40000" stroke="#2a0000" stroke-width="0.6" stroke-linejoin="round"/><rect x="1060.400" y="481.1" width="7.800" height="98.5" fill="url(#pipeg)" stroke="#2a0000" stroke-width="0.600"/><polygon points="1049.7,494.7 1060.4,496.7 1060.4,501.2 1049.7,499.2" fill="#6e0000" stroke="#2a0000" stroke-width="0.6" stroke-linejoin="round"/><polygon points="1049.7,541.7 1060.4,543.7 1060.4,548.2 1049.7,546.2" fill="#6e0000" stroke="#2a0000" stroke-width="0.6" stroke-linejoin="round"/><polyline points="1068.8,486.7 1073.0,488.2" fill="none" stroke="#3a0000" stroke-width="1.6" stroke-linecap="butt" stroke-linejoin="round"/><polyline points="1068.8,497.9 1073.0,499.4" fill="none" stroke="#3a0000" stroke-width="1.6" stroke-linecap="butt" stroke-linejoin="round"/><polyline points="1068.8,509.1 1073.0,510.6" fill="none" stroke="#3a0000" stroke-width="1.6" stroke-linecap="butt" stroke-linejoin="round"/><polyline points="1068.8,520.3 1073.0,521.8" fill="none" stroke="#3a0000" stroke-width="1.6" stroke-linecap="butt" stroke-linejoin="round"/><polyline points="1068.8,482.7 1068.8,527.7" fill="none" stroke="#1e0000" stroke-width="2" stroke-linecap="butt" stroke-linejoin="round"/><polyline points="1073.0,482.7 1073.0,527.7" fill="none" stroke="#1e0000" stroke-width="2" stroke-linecap="butt" stroke-linejoin="round"/><polyline points="1068.5,582.2 1086.0,566.8" fill="none" stroke="#1a0000" stroke-width="3.0" stroke-linecap="butt" stroke-linejoin="round"/><polyline points="1068.5,582.2 1086.0,566.8" fill="none" stroke="#a00000" stroke-width="1.2000000000000002" stroke-linecap="butt" stroke-linejoin="round"/><polyline points="991.6,506.0 991.6,557.5" fill="none" stroke="#1a0000" stroke-width="2.4" stroke-linecap="butt" stroke-linejoin="round"/><polyline points="991.6,506.0 991.6,557.5" fill="none" stroke="#a00000" stroke-width="0.6000000000000001" stroke-linecap="butt" stroke-linejoin="round"/><polyline points="1017.6,519.3 1017.6,570.8" fill="none" stroke="#1a0000" stroke-width="2.4" stroke-linecap="butt" stroke-linejoin="round"/><polyline points="1017.6,519.3 1017.6,570.8" fill="none" stroke="#a00000" stroke-width="0.6000000000000001" stroke-linecap="butt" stroke-linejoin="round"/><polyline points="1041.0,519.7 1041.0,571.2" fill="none" stroke="#1a0000" stroke-width="2.4" stroke-linecap="butt" stroke-linejoin="round"/><polyline points="1041.0,519.7 1041.0,571.2" fill="none" stroke="#a00000" stroke-width="0.6000000000000001" stroke-linecap="butt" stroke-linejoin="round"/><polyline points="1074.6,504.5 1074.6,556.0" fill="none" stroke="#1a0000" stroke-width="2.4" stroke-linecap="butt" stroke-linejoin="round"/><polyline points="1074.6,504.5 1074.6,556.0" fill="none" stroke="#a00000" stroke-width="0.6000000000000001" stroke-linecap="butt" stroke-linejoin="round"/><polyline points="1103.2,505.3 1103.2,556.8" fill="none" stroke="#1a0000" stroke-width="2.4" stroke-linecap="butt" stroke-linejoin="round"/><polyline points="1103.2,505.3 1103.2,556.8" fill="none" stroke="#a00000" stroke-width="0.6000000000000001" stroke-linecap="butt" stroke-linejoin="round"/><polyline points="991.6,506.0 1017.6,519.3 1041.0,519.7" fill="none" stroke="#1a0000" stroke-width="2.6" stroke-linecap="butt" stroke-linejoin="round"/><polyline points="991.6,506.0 1017.6,519.3 1041.0,519.7" fill="none" stroke="#a00000" stroke-width="0.8000000000000003" stroke-linecap="butt" stroke-linejoin="round"/><polyline points="1074.6,504.5 1103.2,505.3 1107.2,498.9" fill="none" stroke="#1a0000" stroke-width="2.6" stroke-linecap="butt" stroke-linejoin="round"/><polyline points="1074.6,504.5 1103.2,505.3 1107.2,498.9" fill="none" stroke="#a00000" stroke-width="0.8000000000000003" stroke-linecap="butt" stroke-linejoin="round"/><polyline points="991.6,531.5 1017.6,544.8 1041.0,545.2" fill="none" stroke="#1a0000" stroke-width="2.4" stroke-linecap="butt" stroke-linejoin="round"/><polyline points="991.6,531.5 1017.6,544.8 1041.0,545.2" fill="none" stroke="#a00000" stroke-width="0.6000000000000001" stroke-linecap="butt" stroke-linejoin="round"/><polyline points="1074.6,530.0 1103.2,530.8 1107.2,524.4" fill="none" stroke="#1a0000" stroke-width="2.4" stroke-linecap="butt" stroke-linejoin="round"/><polyline points="1074.6,530.0 1103.2,530.8 1107.2,524.4" fill="none" stroke="#a00000" stroke-width="0.6000000000000001" stroke-linecap="butt" stroke-linejoin="round"/><polyline points="991.6,551.5 999.3,516.3" fill="none" stroke="#1a0000" stroke-width="1.7999999999999998" stroke-linecap="butt" stroke-linejoin="round"/><polyline points="991.6,551.5 999.3,516.3" fill="none" stroke="#a00000" stroke-width="0.5" stroke-linecap="butt" stroke-linejoin="round"/><polyline points="991.6,531.5 1017.6,566.8" fill="none" stroke="#1a0000" stroke-width="1.7999999999999998" stroke-linecap="butt" stroke-linejoin="round"/><polyline points="991.6,531.5 1017.6,566.8" fill="none" stroke="#a00000" stroke-width="0.5" stroke-linecap="butt" stroke-linejoin="round"/><polyline points="1077.6,552.0 1077.6,509.5 1080.6,507.5 1098.2,508.3 1100.2,511.3 1100.2,552.8" fill="none" stroke="#1a0000" stroke-width="2.2" stroke-linecap="butt" stroke-linejoin="round"/><polyline points="1077.6,552.0 1077.6,509.5 1080.6,507.5 1098.2,508.3 1100.2,511.3 1100.2,552.8" fill="none" stroke="#a00000" stroke-width="0.5" stroke-linecap="butt" stroke-linejoin="round"/><polyline points="1077.6,532.0 1100.2,532.8" fill="none" stroke="#1a0000" stroke-width="2.0" stroke-linecap="butt" stroke-linejoin="round"/><polyline points="1077.6,532.0 1100.2,532.8" fill="none" stroke="#a00000" stroke-width="0.5" stroke-linecap="butt" stroke-linejoin="round"/><polyline points="1107.2,524.4 1103.2,546.8" fill="none" stroke="#1a0000" stroke-width="1.7999999999999998" stroke-linecap="butt" stroke-linejoin="round"/><polyline points="1107.2,524.4 1103.2,546.8" fill="none" stroke="#a00000" stroke-width="0.5" stroke-linecap="butt" stroke-linejoin="round"/><polygon points="991.6,553.5 1017.6,569.8 1017.6,580.8 991.6,564.5" fill="#6a0000" stroke="#1c0000" stroke-width="0.8" stroke-linejoin="round"/><polygon points="991.6,564.5 1017.6,580.8 1017.6,582.3 991.6,566.0" fill="#240000"/><polygon points="1017.6,569.8 1041.0,571.7 1041.0,581.2 1017.6,580.8" fill="#a60000" stroke="#1c0000" stroke-width="0.8" stroke-linejoin="round"/><polygon points="1017.6,580.8 1041.0,581.2 1041.0,582.7 1017.6,582.3" fill="#300000"/><polygon points="1041.0,569.2 1060.0,564.2 1075.0,554.0 1075.0,563.0 1060.0,575.2 1041.0,579.2" fill="#d00000" stroke="#300000" stroke-width="0.6" stroke-linejoin="round"/><polygon points="1074.6,555.0 1103.2,556.8 1103.2,565.8 1074.6,563.0" fill="#b00000" stroke="#1c0000" stroke-width="0.8" stroke-linejoin="round"/><polygon points="1103.2,556.8 1107.2,546.4 1107.2,558.4 1103.2,565.8" fill="#7a0000" stroke="#1c0000" stroke-width="0.8" stroke-linejoin="round"/><polygon points="1074.6,563.0 1103.2,565.8 1107.2,558.4 1107.2,559.9 1103.2,567.3 1074.6,564.5" fill="#240000"/><polyline points="991.6,551.5 991.6,564.5" fill="none" stroke="#1a0000" stroke-width="2.4" stroke-linecap="butt" stroke-linejoin="round"/><polyline points="991.6,551.5 991.6,564.5" fill="none" stroke="#a00000" stroke-width="0.6000000000000001" stroke-linecap="butt" stroke-linejoin="round"/><polyline points="1017.6,564.8 1017.6,580.8" fill="none" stroke="#1a0000" stroke-width="2.4" stroke-linecap="butt" stroke-linejoin="round"/><polyline points="1017.6,564.8 1017.6,580.8" fill="none" stroke="#a00000" stroke-width="0.6000000000000001" stroke-linecap="butt" stroke-linejoin="round"/><polyline points="1041.0,565.2 1041.0,581.2" fill="none" stroke="#1a0000" stroke-width="2.4" stroke-linecap="butt" stroke-linejoin="round"/><polyline points="1041.0,565.2 1041.0,581.2" fill="none" stroke="#a00000" stroke-width="0.6000000000000001" stroke-linecap="butt" stroke-linejoin="round"/><polygon points="991.6,800.5 999.3,787.3 1035.9,777.6 1081.3,780.2 1107.2,793.4 1103.2,799.8 1074.6,797.0 1041.0,814.2 1017.6,813.8" fill="#8e0000"/><polygon points="991.6,793.0 999.3,779.8 999.3,787.3 991.6,800.5" fill="#a80000" stroke="#300000" stroke-width="0.6" stroke-linejoin="round"/><polygon points="999.3,779.8 1035.9,770.1 1035.9,777.6 999.3,787.3" fill="#dc0000" stroke="#300000" stroke-width="0.6" stroke-linejoin="round"/><polygon points="1035.9,770.1 1081.3,772.7 1081.3,780.2 1035.9,777.6" fill="#c80000" stroke="#300000" stroke-width="0.6" stroke-linejoin="round"/><polygon points="1081.3,772.7 1107.2,785.9 1107.2,794.4 1081.3,780.2" fill="#2e0000" stroke="#200000" stroke-width="0.6" stroke-linejoin="round"/><polygon points="999.3,787.3 1035.9,777.6 1030.0,786.6 1001.0,795.3" fill="#d40000"/><polygon points="1077.7,784.2 1098.0,788.2 1098.0,793.5 1077.7,792.5" fill="#b00000"/><polygon points="1077.7,792.3 1098.0,793.3 1102.0,799.4 1077.7,797.5" fill="url(#mesh)"/><polygon points="998.5,794.5 1003.0,796.3 1032.0,786.6 1060.0,789.6 1060.0,808.2 1040.0,812.2 1018.0,811.8" fill="url(#mesh)"/><polyline points="1003.0,795.5 1040.0,806.2 1060.0,791.6" fill="none" stroke="#a00000" stroke-width="1.6" stroke-linecap="butt" stroke-linejoin="round"/><polyline points="1018.0,810.8 1046.0,789.6" fill="none" stroke="#a00000" stroke-width="1.6" stroke-linecap="butt" stroke-linejoin="round"/><polyline points="999.3,728.8 999.3,779.8" fill="none" stroke="#1a0000" stroke-width="2.4" stroke-linecap="butt" stroke-linejoin="round"/><polyline points="999.3,728.8 999.3,779.8" fill="none" stroke="#a00000" stroke-width="0.6000000000000001" stroke-linecap="butt" stroke-linejoin="round"/><polyline points="1035.9,719.1 1035.9,770.1" fill="none" stroke="#1a0000" stroke-width="2.4" stroke-linecap="butt" stroke-linejoin="round"/><polyline points="1035.9,719.1 1035.9,770.1" fill="none" stroke="#a00000" stroke-width="0.6000000000000001" stroke-linecap="butt" stroke-linejoin="round"/><polyline points="1081.3,721.7 1081.3,772.7" fill="none" stroke="#1a0000" stroke-width="2.4" stroke-linecap="butt" stroke-linejoin="round"/><polyline points="1081.3,721.7 1081.3,772.7" fill="none" stroke="#a00000" stroke-width="0.6000000000000001" stroke-linecap="butt" stroke-linejoin="round"/><polyline points="1107.2,734.9 1107.2,785.9" fill="none" stroke="#1a0000" stroke-width="2.4" stroke-linecap="butt" stroke-linejoin="round"/><polyline points="1107.2,734.9 1107.2,785.9" fill="none" stroke="#a00000" stroke-width="0.6000000000000001" stroke-linecap="butt" stroke-linejoin="round"/><polyline points="991.6,742.0 999.3,728.8 1035.9,719.1 1081.3,721.7 1107.2,734.9" fill="none" stroke="#1a0000" stroke-width="2.6" stroke-linecap="butt" stroke-linejoin="round"/><polyline points="991.6,742.0 999.3,728.8 1035.9,719.1 1081.3,721.7 1107.2,734.9" fill="none" stroke="#a00000" stroke-width="0.8000000000000003" stroke-linecap="butt" stroke-linejoin="round"/><polyline points="991.6,767.5 999.3,754.3 1035.9,744.6 1081.3,747.2 1107.2,760.4" fill="none" stroke="#1a0000" stroke-width="2.4" stroke-linecap="butt" stroke-linejoin="round"/><polyline points="991.6,767.5 999.3,754.3 1035.9,744.6 1081.3,747.2 1107.2,760.4" fill="none" stroke="#a00000" stroke-width="0.6000000000000001" stroke-linecap="butt" stroke-linejoin="round"/><rect x="1036" y="717.1" width="25.200" height="94.5" fill="url(#colg)"/><polygon points="1045.0,747.7 1060.4,742.7 1060.4,808.2 1045.0,814.2" fill="#b40000" stroke="#2a0000" stroke-width="0.6" stroke-linejoin="round"/><rect x="1060.400" y="717.1" width="7.800" height="98.5" fill="url(#pipeg)" stroke="#2a0000" stroke-width="0.600"/><polygon points="1049.7,730.7 1060.4,732.7 1060.4,737.2 1049.7,735.2" fill="#6e0000" stroke="#2a0000" stroke-width="0.6" stroke-linejoin="round"/><polygon points="1049.7,777.7 1060.4,779.7 1060.4,784.2 1049.7,782.2" fill="#6e0000" stroke="#2a0000" stroke-width="0.6" stroke-linejoin="round"/><polyline points="1027.5,716.7 1038.5,721.2" fill="none" stroke="#3a0000" stroke-width="1.6" stroke-linecap="butt" stroke-linejoin="round"/><polyline points="1027.5,728.5 1038.5,733.0" fill="none" stroke="#3a0000" stroke-width="1.6" stroke-linecap="butt" stroke-linejoin="round"/><polyline points="1027.5,740.3 1038.5,744.8" fill="none" stroke="#3a0000" stroke-width="1.6" stroke-linecap="butt" stroke-linejoin="round"/><polyline points="1027.5,752.1 1038.5,756.6" fill="none" stroke="#3a0000" stroke-width="1.6" stroke-linecap="butt" stroke-linejoin="round"/><polyline points="1027.5,763.9 1038.5,768.4" fill="none" stroke="#3a0000" stroke-width="1.6" stroke-linecap="butt" stroke-linejoin="round"/><polyline points="1027.5,775.7 1038.5,780.2" fill="none" stroke="#3a0000" stroke-width="1.6" stroke-linecap="butt" stroke-linejoin="round"/><polyline points="1027.5,787.5 1038.5,792.0" fill="none" stroke="#3a0000" stroke-width="1.6" stroke-linecap="butt" stroke-linejoin="round"/><polyline points="1027.5,799.3 1038.5,803.8" fill="none" stroke="#3a0000" stroke-width="1.6" stroke-linecap="butt" stroke-linejoin="round"/><polyline points="1027.5,712.7 1027.5,802.2" fill="none" stroke="#1e0000" stroke-width="2" stroke-linecap="butt" stroke-linejoin="round"/><polyline points="1038.5,712.7 1038.5,802.2" fill="none" stroke="#1e0000" stroke-width="2" stroke-linecap="butt" stroke-linejoin="round"/><rect x="1076.300" y="716.7" width="4.600" height="44" fill="url(#pipe2g)" stroke="#2a0000" stroke-width="0.600"/><polyline points="1068.5,818.2 1086.0,802.8" fill="none" stroke="#1a0000" stroke-width="3.0" stroke-linecap="butt" stroke-linejoin="round"/><polyline points="1068.5,818.2 1086.0,802.8" fill="none" stroke="#a00000" stroke-width="1.2000000000000002" stroke-linecap="butt" stroke-linejoin="round"/><polyline points="991.6,742.0 991.6,793.5" fill="none" stroke="#1a0000" stroke-width="2.4" stroke-linecap="butt" stroke-linejoin="round"/><polyline points="991.6,742.0 991.6,793.5" fill="none" stroke="#a00000" stroke-width="0.6000000000000001" stroke-linecap="butt" stroke-linejoin="round"/><polyline points="1017.6,755.3 1017.6,806.8" fill="none" stroke="#1a0000" stroke-width="2.4" stroke-linecap="butt" stroke-linejoin="round"/><polyline points="1017.6,755.3 1017.6,806.8" fill="none" stroke="#a00000" stroke-width="0.6000000000000001" stroke-linecap="butt" stroke-linejoin="round"/><polyline points="1041.0,755.7 1041.0,807.2" fill="none" stroke="#1a0000" stroke-width="2.4" stroke-linecap="butt" stroke-linejoin="round"/><polyline points="1041.0,755.7 1041.0,807.2" fill="none" stroke="#a00000" stroke-width="0.6000000000000001" stroke-linecap="butt" stroke-linejoin="round"/><polyline points="1074.6,740.5 1074.6,792.0" fill="none" stroke="#1a0000" stroke-width="2.4" stroke-linecap="butt" stroke-linejoin="round"/><polyline points="1074.6,740.5 1074.6,792.0" fill="none" stroke="#a00000" stroke-width="0.6000000000000001" stroke-linecap="butt" stroke-linejoin="round"/><polyline points="1103.2,741.3 1103.2,792.8" fill="none" stroke="#1a0000" stroke-width="2.4" stroke-linecap="butt" stroke-linejoin="round"/><polyline points="1103.2,741.3 1103.2,792.8" fill="none" stroke="#a00000" stroke-width="0.6000000000000001" stroke-linecap="butt" stroke-linejoin="round"/><polyline points="991.6,742.0 1017.6,755.3 1041.0,755.7" fill="none" stroke="#1a0000" stroke-width="2.6" stroke-linecap="butt" stroke-linejoin="round"/><polyline points="991.6,742.0 1017.6,755.3 1041.0,755.7" fill="none" stroke="#a00000" stroke-width="0.8000000000000003" stroke-linecap="butt" stroke-linejoin="round"/><polyline points="1074.6,740.5 1103.2,741.3 1107.2,734.9" fill="none" stroke="#1a0000" stroke-width="2.6" stroke-linecap="butt" stroke-linejoin="round"/><polyline points="1074.6,740.5 1103.2,741.3 1107.2,734.9" fill="none" stroke="#a00000" stroke-width="0.8000000000000003" stroke-linecap="butt" stroke-linejoin="round"/><polyline points="991.6,767.5 1017.6,780.8 1041.0,781.2" fill="none" stroke="#1a0000" stroke-width="2.4" stroke-linecap="butt" stroke-linejoin="round"/><polyline points="991.6,767.5 1017.6,780.8 1041.0,781.2" fill="none" stroke="#a00000" stroke-width="0.6000000000000001" stroke-linecap="butt" stroke-linejoin="round"/><polyline points="1074.6,766.0 1103.2,766.8 1107.2,760.4" fill="none" stroke="#1a0000" stroke-width="2.4" stroke-linecap="butt" stroke-linejoin="round"/><polyline points="1074.6,766.0 1103.2,766.8 1107.2,760.4" fill="none" stroke="#a00000" stroke-width="0.6000000000000001" stroke-linecap="butt" stroke-linejoin="round"/><polyline points="991.6,787.5 999.3,752.3" fill="none" stroke="#1a0000" stroke-width="1.7999999999999998" stroke-linecap="butt" stroke-linejoin="round"/><polyline points="991.6,787.5 999.3,752.3" fill="none" stroke="#a00000" stroke-width="0.5" stroke-linecap="butt" stroke-linejoin="round"/><polyline points="991.6,767.5 1017.6,802.8" fill="none" stroke="#1a0000" stroke-width="1.7999999999999998" stroke-linecap="butt" stroke-linejoin="round"/><polyline points="991.6,767.5 1017.6,802.8" fill="none" stroke="#a00000" stroke-width="0.5" stroke-linecap="butt" stroke-linejoin="round"/><polyline points="1077.6,788.0 1077.6,745.5 1080.6,743.5 1098.2,744.3 1100.2,747.3 1100.2,788.8" fill="none" stroke="#1a0000" stroke-width="2.2" stroke-linecap="butt" stroke-linejoin="round"/><polyline points="1077.6,788.0 1077.6,745.5 1080.6,743.5 1098.2,744.3 1100.2,747.3 1100.2,788.8" fill="none" stroke="#a00000" stroke-width="0.5" stroke-linecap="butt" stroke-linejoin="round"/><polyline points="1077.6,768.0 1100.2,768.8" fill="none" stroke="#1a0000" stroke-width="2.0" stroke-linecap="butt" stroke-linejoin="round"/><polyline points="1077.6,768.0 1100.2,768.8" fill="none" stroke="#a00000" stroke-width="0.5" stroke-linecap="butt" stroke-linejoin="round"/><polyline points="1107.2,760.4 1103.2,782.8" fill="none" stroke="#1a0000" stroke-width="1.7999999999999998" stroke-linecap="butt" stroke-linejoin="round"/><polyline points="1107.2,760.4 1103.2,782.8" fill="none" stroke="#a00000" stroke-width="0.5" stroke-linecap="butt" stroke-linejoin="round"/><polygon points="991.6,789.5 1017.6,805.8 1017.6,816.8 991.6,800.5" fill="#6a0000" stroke="#1c0000" stroke-width="0.8" stroke-linejoin="round"/><polygon points="991.6,800.5 1017.6,816.8 1017.6,818.3 991.6,802.0" fill="#240000"/><polygon points="1017.6,805.8 1041.0,807.7 1041.0,817.2 1017.6,816.8" fill="#a60000" stroke="#1c0000" stroke-width="0.8" stroke-linejoin="round"/><polygon points="1017.6,816.8 1041.0,817.2 1041.0,818.7 1017.6,818.3" fill="#300000"/><polygon points="1041.0,805.2 1060.0,800.2 1075.0,790.0 1075.0,799.0 1060.0,811.2 1041.0,815.2" fill="#d00000" stroke="#300000" stroke-width="0.6" stroke-linejoin="round"/><polygon points="1074.6,791.0 1103.2,792.8 1103.2,801.8 1074.6,799.0" fill="#b00000" stroke="#1c0000" stroke-width="0.8" stroke-linejoin="round"/><polygon points="1103.2,792.8 1107.2,782.4 1107.2,794.4 1103.2,801.8" fill="#7a0000" stroke="#1c0000" stroke-width="0.8" stroke-linejoin="round"/><polygon points="1074.6,799.0 1103.2,801.8 1107.2,794.4 1107.2,795.9 1103.2,803.3 1074.6,800.5" fill="#240000"/><polyline points="991.6,787.5 991.6,800.5" fill="none" stroke="#1a0000" stroke-width="2.4" stroke-linecap="butt" stroke-linejoin="round"/><polyline points="991.6,787.5 991.6,800.5" fill="none" stroke="#a00000" stroke-width="0.6000000000000001" stroke-linecap="butt" stroke-linejoin="round"/><polyline points="1017.6,800.8 1017.6,816.8" fill="none" stroke="#1a0000" stroke-width="2.4" stroke-linecap="butt" stroke-linejoin="round"/><polyline points="1017.6,800.8 1017.6,816.8" fill="none" stroke="#a00000" stroke-width="0.6000000000000001" stroke-linecap="butt" stroke-linejoin="round"/><polyline points="1041.0,801.2 1041.0,817.2" fill="none" stroke="#1a0000" stroke-width="2.4" stroke-linecap="butt" stroke-linejoin="round"/><polyline points="1041.0,801.2 1041.0,817.2" fill="none" stroke="#a00000" stroke-width="0.6000000000000001" stroke-linecap="butt" stroke-linejoin="round"/><rect x="1060.400" y="286" width="7.800" height="60" fill="url(#pipeg)" stroke="#2a0000" stroke-width="0.600"/><polyline points="1068.5,344.5 1086.0,329.1" fill="none" stroke="#1a0000" stroke-width="3.0" stroke-linecap="butt" stroke-linejoin="round"/><polyline points="1068.5,344.5 1086.0,329.1" fill="none" stroke="#a00000" stroke-width="1.2000000000000002" stroke-linecap="butt" stroke-linejoin="round"/><polyline points="991.6,268.3 991.6,319.8" fill="none" stroke="#1a0000" stroke-width="2.4" stroke-linecap="butt" stroke-linejoin="round"/><polyline points="991.6,268.3 991.6,319.8" fill="none" stroke="#a00000" stroke-width="0.6000000000000001" stroke-linecap="butt" stroke-linejoin="round"/><polyline points="1017.6,281.6 1017.6,333.1" fill="none" stroke="#1a0000" stroke-width="2.4" stroke-linecap="butt" stroke-linejoin="round"/><polyline points="1017.6,281.6 1017.6,333.1" fill="none" stroke="#a00000" stroke-width="0.6000000000000001" stroke-linecap="butt" stroke-linejoin="round"/><polyline points="1041.0,282.0 1041.0,333.5" fill="none" stroke="#1a0000" stroke-width="2.4" stroke-linecap="butt" stroke-linejoin="round"/><polyline points="1041.0,282.0 1041.0,333.5" fill="none" stroke="#a00000" stroke-width="0.6000000000000001" stroke-linecap="butt" stroke-linejoin="round"/><polyline points="1074.6,266.8 1074.6,318.3" fill="none" stroke="#1a0000" stroke-width="2.4" stroke-linecap="butt" stroke-linejoin="round"/><polyline points="1074.6,266.8 1074.6,318.3" fill="none" stroke="#a00000" stroke-width="0.6000000000000001" stroke-linecap="butt" stroke-linejoin="round"/><polyline points="1103.2,267.6 1103.2,319.1" fill="none" stroke="#1a0000" stroke-width="2.4" stroke-linecap="butt" stroke-linejoin="round"/><polyline points="1103.2,267.6 1103.2,319.1" fill="none" stroke="#a00000" stroke-width="0.6000000000000001" stroke-linecap="butt" stroke-linejoin="round"/><polyline points="991.6,268.3 1017.6,281.6 1041.0,282.0" fill="none" stroke="#1a0000" stroke-width="2.6" stroke-linecap="butt" stroke-linejoin="round"/><polyline points="991.6,268.3 1017.6,281.6 1041.0,282.0" fill="none" stroke="#a00000" stroke-width="0.8000000000000003" stroke-linecap="butt" stroke-linejoin="round"/><polyline points="1074.6,266.8 1103.2,267.6 1107.2,261.2" fill="none" stroke="#1a0000" stroke-width="2.6" stroke-linecap="butt" stroke-linejoin="round"/><polyline points="1074.6,266.8 1103.2,267.6 1107.2,261.2" fill="none" stroke="#a00000" stroke-width="0.8000000000000003" stroke-linecap="butt" stroke-linejoin="round"/><polyline points="991.6,293.8 1017.6,307.1 1041.0,307.5" fill="none" stroke="#1a0000" stroke-width="2.4" stroke-linecap="butt" stroke-linejoin="round"/><polyline points="991.6,293.8 1017.6,307.1 1041.0,307.5" fill="none" stroke="#a00000" stroke-width="0.6000000000000001" stroke-linecap="butt" stroke-linejoin="round"/><polyline points="1074.6,292.3 1103.2,293.1 1107.2,286.7" fill="none" stroke="#1a0000" stroke-width="2.4" stroke-linecap="butt" stroke-linejoin="round"/><polyline points="1074.6,292.3 1103.2,293.1 1107.2,286.7" fill="none" stroke="#a00000" stroke-width="0.6000000000000001" stroke-linecap="butt" stroke-linejoin="round"/><polyline points="991.6,313.8 999.3,278.6" fill="none" stroke="#1a0000" stroke-width="1.7999999999999998" stroke-linecap="butt" stroke-linejoin="round"/><polyline points="991.6,313.8 999.3,278.6" fill="none" stroke="#a00000" stroke-width="0.5" stroke-linecap="butt" stroke-linejoin="round"/><polyline points="991.6,293.8 1017.6,329.1" fill="none" stroke="#1a0000" stroke-width="1.7999999999999998" stroke-linecap="butt" stroke-linejoin="round"/><polyline points="991.6,293.8 1017.6,329.1" fill="none" stroke="#a00000" stroke-width="0.5" stroke-linecap="butt" stroke-linejoin="round"/><polyline points="1077.6,314.3 1077.6,271.8 1080.6,269.8 1098.2,270.6 1100.2,273.6 1100.2,315.1" fill="none" stroke="#1a0000" stroke-width="2.2" stroke-linecap="butt" stroke-linejoin="round"/><polyline points="1077.6,314.3 1077.6,271.8 1080.6,269.8 1098.2,270.6 1100.2,273.6 1100.2,315.1" fill="none" stroke="#a00000" stroke-width="0.5" stroke-linecap="butt" stroke-linejoin="round"/><polyline points="1077.6,294.3 1100.2,295.1" fill="none" stroke="#1a0000" stroke-width="2.0" stroke-linecap="butt" stroke-linejoin="round"/><polyline points="1077.6,294.3 1100.2,295.1" fill="none" stroke="#a00000" stroke-width="0.5" stroke-linecap="butt" stroke-linejoin="round"/><polyline points="1107.2,286.7 1103.2,309.1" fill="none" stroke="#1a0000" stroke-width="1.7999999999999998" stroke-linecap="butt" stroke-linejoin="round"/><polyline points="1107.2,286.7 1103.2,309.1" fill="none" stroke="#a00000" stroke-width="0.5" stroke-linecap="butt" stroke-linejoin="round"/><rect x="1021.600" y="246" width="6.300" height="92" fill="url(#postg)" stroke="#3a2400" stroke-width="0.700"/><polygon points="991.6,315.8 1017.6,332.1 1017.6,343.1 991.6,326.8" fill="#6a0000" stroke="#1c0000" stroke-width="0.8" stroke-linejoin="round"/><polygon points="991.6,326.8 1017.6,343.1 1017.6,344.6 991.6,328.3" fill="#240000"/><polygon points="1017.6,332.1 1041.0,334.0 1041.0,343.5 1017.6,343.1" fill="#a60000" stroke="#1c0000" stroke-width="0.8" stroke-linejoin="round"/><polygon points="1017.6,343.1 1041.0,343.5 1041.0,345.0 1017.6,344.6" fill="#300000"/><polygon points="1041.0,331.5 1060.0,326.5 1075.0,316.3 1075.0,325.3 1060.0,337.5 1041.0,341.5" fill="#d00000" stroke="#300000" stroke-width="0.6" stroke-linejoin="round"/><polygon points="1074.6,317.3 1103.2,319.1 1103.2,328.1 1074.6,325.3" fill="#b00000" stroke="#1c0000" stroke-width="0.8" stroke-linejoin="round"/><polygon points="1103.2,319.1 1107.2,308.7 1107.2,320.7 1103.2,328.1" fill="#7a0000" stroke="#1c0000" stroke-width="0.8" stroke-linejoin="round"/><polygon points="1074.6,325.3 1103.2,328.1 1107.2,320.7 1107.2,322.2 1103.2,329.6 1074.6,326.8" fill="#240000"/><polyline points="991.6,313.8 991.6,326.8" fill="none" stroke="#1a0000" stroke-width="2.4" stroke-linecap="butt" stroke-linejoin="round"/><polyline points="991.6,313.8 991.6,326.8" fill="none" stroke="#a00000" stroke-width="0.6000000000000001" stroke-linecap="butt" stroke-linejoin="round"/><polyline points="1017.6,327.1 1017.6,343.1" fill="none" stroke="#1a0000" stroke-width="2.4" stroke-linecap="butt" stroke-linejoin="round"/><polyline points="1017.6,327.1 1017.6,343.1" fill="none" stroke="#a00000" stroke-width="0.6000000000000001" stroke-linecap="butt" stroke-linejoin="round"/><polyline points="1041.0,327.5 1041.0,343.5" fill="none" stroke="#1a0000" stroke-width="2.4" stroke-linecap="butt" stroke-linejoin="round"/><polyline points="1041.0,327.5 1041.0,343.5" fill="none" stroke="#a00000" stroke-width="0.6000000000000001" stroke-linecap="butt" stroke-linejoin="round"/><g transform="translate(1064.4,290.0)"><rect x="-8.400" y="-7.200" width="13" height="7.400" rx="1.600" fill="#140808"/><rect x="-8.400" y="-6" width="3" height="5.400" fill="#c01818"/><rect x="-2.200" y="-9.800" width="3.800" height="3" fill="#c00000"/><path d="M3 -29C9 -30 13.500 -24 12.200 -18.500C11.600 -16 10 -14.500 7.500 -13.500" fill="none" stroke="#1c0000" stroke-width="5.400"/><path d="M3 -29C9 -30 13.500 -24 12.200 -18.500C11.600 -16 10 -14.500 7.500 -13.500" fill="none" stroke="#c80000" stroke-width="3.400"/><path d="M-0.800 -32L3 -27.500" stroke="#c00000" stroke-width="3.400"/><path d="M-3.400 -29.500L1 -31L5 -30.500L7.600 -26V-19H-3.400z" fill="#100404"/><rect x="-3.800" y="-19.400" width="11.200" height="10" rx="1.800" fill="#120606"/><rect x="-1.400" y="-18" width="6.200" height="7" rx="1" fill="#565656"/><circle cx="9.200" cy="-11.400" r="2.100" fill="#120606"/><path d="M-4.500 -42L0.500 -42.500L2.800 -38.500V-33L-1 -32L-4 -33.500L-6.800 -35.500L-6.400 -38L-4 -38.500z" fill="#100404"/><path d="M-0.600 -39l0.600 3 1.100 -0.300 -0.500 -3z" fill="#a8c0e8"/><circle cx="-2.800" cy="-39.600" r="0.800" fill="#c01010"/></g><g transform="translate(1065.4,435.0)"><rect x="-8.400" y="-7.200" width="13" height="7.400" rx="1.600" fill="#140808"/><rect x="-8.400" y="-6" width="3" height="5.400" fill="#c01818"/><rect x="-2.200" y="-9.800" width="3.800" height="3" fill="#c00000"/><path d="M3 -29C9 -30 13.500 -24 12.200 -18.500C11.600 -16 10 -14.500 7.500 -13.500" fill="none" stroke="#1c0000" stroke-width="5.400"/><path d="M3 -29C9 -30 13.500 -24 12.200 -18.500C11.600 -16 10 -14.500 7.500 -13.500" fill="none" stroke="#c80000" stroke-width="3.400"/><path d="M-0.800 -32L3 -27.500" stroke="#c00000" stroke-width="3.400"/><path d="M-3.400 -29.500L1 -31L5 -30.500L7.600 -26V-19H-3.400z" fill="#100404"/><rect x="-3.800" y="-19.400" width="11.200" height="10" rx="1.800" fill="#120606"/><rect x="-1.400" y="-18" width="6.200" height="7" rx="1" fill="#565656"/><circle cx="9.200" cy="-11.400" r="2.100" fill="#120606"/><path d="M-4.500 -42L0.500 -42.500L2.800 -38.500V-33L-1 -32L-4 -33.500L-6.800 -35.500L-6.400 -38L-4 -38.500z" fill="#100404"/><path d="M-0.600 -39l0.600 3 1.100 -0.300 -0.500 -3z" fill="#a8c0e8"/><circle cx="-2.800" cy="-39.600" r="0.800" fill="#c01010"/></g><g transform="translate(1065.2,859.7)"><rect x="-8.400" y="-7.200" width="13" height="7.400" rx="1.600" fill="#140808"/><rect x="-8.400" y="-6" width="3" height="5.400" fill="#c01818"/><rect x="-2.200" y="-9.800" width="3.800" height="3" fill="#c00000"/><path d="M3 -29C9 -30 13.500 -24 12.200 -18.500C11.600 -16 10 -14.500 7.500 -13.500" fill="none" stroke="#1c0000" stroke-width="5.400"/><path d="M3 -29C9 -30 13.500 -24 12.200 -18.500C11.600 -16 10 -14.500 7.500 -13.500" fill="none" stroke="#c80000" stroke-width="3.400"/><path d="M-0.800 -32L3 -27.500" stroke="#c00000" stroke-width="3.400"/><path d="M-3.400 -29.500L1 -31L5 -30.500L7.600 -26V-19H-3.400z" fill="#100404"/><rect x="-3.800" y="-19.400" width="11.200" height="10" rx="1.800" fill="#120606"/><rect x="-1.400" y="-18" width="6.200" height="7" rx="1" fill="#565656"/><circle cx="9.200" cy="-11.400" r="2.100" fill="#120606"/><path d="M-4.500 -42L0.500 -42.500L2.800 -38.500V-33L-1 -32L-4 -33.500L-6.800 -35.500L-6.400 -38L-4 -38.500z" fill="#100404"/><path d="M-0.600 -39l0.600 3 1.100 -0.300 -0.500 -3z" fill="#a8c0e8"/><circle cx="-2.800" cy="-39.600" r="0.800" fill="#c01010"/></g><g transform="translate(1073,625)"><path d="M4 1L10 0.500L11.500 5L10.500 8.500L5 9L1 8.500L1.500 6.500L4 6z" fill="#1a1a1a"/><path d="M5 3h4v2.500H5z" fill="#c03030"/><path d="M6 9C8 13 16 9.500 19 14.500 21 18.500 17 21 14 20.500" fill="none" stroke="#300000" stroke-width="4.800"/><path d="M6 9C8 13 16 9.500 19 14.500 21 18.500 17 21 14 20.500" fill="none" stroke="#d40000" stroke-width="3"/><rect x="13" y="20.500" width="9" height="9" rx="1.800" fill="#7c7c7c" stroke="#1a1a1a" stroke-width="0.900"/><path d="M12 21C7 22 5.500 27 5.800 33" fill="none" stroke="#300000" stroke-width="4.800"/><path d="M12 21C7 22 5.500 27 5.800 33" fill="none" stroke="#d40000" stroke-width="3"/><path d="M1 33.500h10.500v3.500H1z" fill="#3a0000"/><path d="M1.500 37h4.500v5H1.500z" fill="#c00000" stroke="#300000" stroke-width="0.600"/></g><ellipse cx="1049.700" cy="985.500" rx="27" ry="8.800" fill="#b00000" stroke="#200000" stroke-width="0.900"/><path d="M1022.700 970V985.500A27 8.800 0 0 0 1076.700 985.500V970z" fill="#c60000" stroke="#200000" stroke-width="0.900"/><path d="M1029 976.0V990.0" stroke="#5a0000" stroke-width="1.400"/><path d="M1036 976.0V990.0" stroke="#5a0000" stroke-width="1.400"/><path d="M1044 979.0V993.0" stroke="#5a0000" stroke-width="1.400"/><path d="M1052 979.0V993.0" stroke="#5a0000" stroke-width="1.400"/><path d="M1060 979.0V993.0" stroke="#5a0000" stroke-width="1.400"/><path d="M1068 976.0V990.0" stroke="#5a0000" stroke-width="1.400"/><rect x="1044.500" y="980" width="7" height="13" fill="#7a0000"/><ellipse cx="1049.700" cy="970" rx="27" ry="8.800" fill="#e00000" stroke="#200000" stroke-width="0.900"/><ellipse cx="1027" cy="969" rx="1.700" ry="0.900" fill="#2a0000"/><ellipse cx="1036" cy="975.5" rx="1.700" ry="0.900" fill="#2a0000"/><ellipse cx="1055" cy="977.5" rx="1.700" ry="0.900" fill="#2a0000"/><ellipse cx="1070" cy="973" rx="1.700" ry="0.900" fill="#2a0000"/><ellipse cx="1030" cy="964.5" rx="1.700" ry="0.900" fill="#2a0000"/><ellipse cx="1069" cy="965" rx="1.700" ry="0.900" fill="#2a0000"/><path d="M1036 940V969Q1048.500 976 1061.200 969V940z" fill="url(#colg)" stroke="#200000" stroke-width="0.600"/><rect x="1035.600" y="950" width="25.600" height="18.500" fill="#a80000" stroke="#240000" stroke-width="0.900"/><rect x="1038.800" y="953" width="18.500" height="12.500" fill="#c8c8c8" stroke="#1a1a1a" stroke-width="0.800"/><rect x="1040" y="955" width="16" height="4" fill="#8c8c8c"/><rect x="1040" y="960.500" width="16" height="1.200" fill="#555"/><rect x="1040" y="963" width="16" height="1.800" fill="#efefef"/><rect x="1038.200" y="953" width="2" height="12.500" fill="#e6dc1e"/><rect x="1055.600" y="953" width="2" height="12.500" fill="#e6dc1e"/><rect x="1035" y="906" width="5" height="6" fill="#2a2a2a"/></svg>
<div style="left:0;top:1040px;width:1916px;height:40px;background:linear-gradient(90deg,#20373f 0%,#1f343f 55%,#1c2b44 85%,#1b2747 100%)"></div>
<div style="left:149px;top:1040px;width:48px;height:40px;background:#4b6068;"></div>
<svg style="left:15px;top:1051px;" width="18" height="18" viewBox="0 0 18 18"><path d="M0.6 3.2L7.4 2.2V8.6H0.6zM8.4 2L17.4 0.6V8.6H8.4zM0.6 9.6H7.4V16L0.6 15zM8.4 9.6H17.4V17.6L8.4 16.2z" fill="#ffffff"/></svg>
<svg style="left:64px;top:1050px;" width="22" height="19" viewBox="0 0 22 19"><path d="M0.4 2.2q0-1.4 1.4-1.4h6l2 2.2H20.2q1.4 0 1.4 1.4V17.4q0 1.2-1.4 1.2H1.8q-1.4 0-1.4-1.2z" fill="#f0b429"/><path d="M0.4 5.4H21.6V17.4q0 1.2-1.4 1.2H1.8q-1.4 0-1.4-1.2z" fill="#fad25a"/><path d="M4.6 18.6V12.6q0-1 1-1H16.4q1 0 1 1v6h-3.2v-3.8H7.8v3.8z" fill="#3d8fe0"/></svg>
<svg style="left:111px;top:1047px;" width="26" height="26" viewBox="0 0 26 26"><defs><linearGradient id="eg1" x1="0" y1="0" x2="1" y2="1"><stop offset="0" stop-color="#35c1f1"/><stop offset="0.5" stop-color="#2a9fe0"/><stop offset="1" stop-color="#0c59a4"/></linearGradient><linearGradient id="eg2" x1="0" y1="0" x2="1" y2="0"><stop offset="0" stop-color="#2fb7e6"/><stop offset="0.5" stop-color="#45d07c"/><stop offset="1" stop-color="#7bdc4a"/></linearGradient></defs>
<circle cx="13" cy="13" r="12.3" fill="url(#eg1)"/><path d="M1 11.5C2 4.5 7.5 0.7 13 0.7c7 0 12.3 5 12.3 11.3 0 4-2.8 6.4-6.2 6.4-2.6 0-4.6-1.2-4.6-2.8 0-1 .9-1.4.9-2.9 0-2.4-2.4-4.4-5.6-4.4C5.600 8.300 2.300 9.600 1 11.500z" fill="url(#eg2)"/>
<path d="M9.800 8.300c-4 .2-6.600 3.500-6.600 7.200 0 5.200 4.300 9.800 10.400 9.800 3 0 5.400-.9 7.400-2.500-6.600 2.600-12.400-1.500-12.400-6.800 0-2.800 1.400-4.600 3.200-5.300-.4-1.400-1-2.200-2-2.400z" fill="#1560b0"/><path d="M11 19.500c1.600 3.400 6.200 4.800 10.800 2.400 1.400-.9 2.400-2 3-3.200-3.600 2.800-9.600 2.200-11-1.600-1 .6-2 1.400-2.800 2.400z" fill="#0f4c93"/></svg>
<svg style="left:161px;top:1048px;" width="24" height="24" viewBox="0 0 24 24"><rect x="0" y="0" width="24" height="24" fill="#2b2b30"/><rect x="0.6" y="0.6" width="22.800" height="22.800" fill="none" stroke="#1aa6e0" stroke-width="1.200"/><circle cx="12" cy="12" r="8.600" fill="none" stroke="#1aa6e0" stroke-width="1.400"/><path d="M8.600 6.800V17.600M8.800 12.400L15.400 7M10.200 11.400L18.200 18.400" fill="none" stroke="#1aa6e0" stroke-width="1.500"/></svg>
<svg style="left:209.8px;top:1047.5px;" width="25" height="25" viewBox="0 0 25 25"><circle cx="12.500" cy="12.500" r="12.200" fill="#344a96"/><path d="M6.200 6L12.500 13.200V21.500M18.800 6L12.500 13.200" fill="none" stroke="#ffffff" stroke-width="2.800" stroke-linecap="round"/></svg>
<svg style="left:258px;top:1050px;" width="25" height="19" viewBox="0 0 25 19"><path d="M1.500 4.500L11 8.500L21.500 1.500L24 11.500L13 18.500L4 15z" fill="#e8a060"/><path d="M2.500 3.500L11.500 7.500L12.500 16.500L4.500 13.500z" fill="#eef4fb"/><path d="M11.500 7.500L20.800 1.800L22.800 10.800L12.500 16.500z" fill="#dfeaf6"/><path d="M4 6.500l6.500 2.800M4.500 9l6.500 2.800M5 11.500l6 2.600M13.500 8.500l6.500-4M14 11l7-4.200M14.300 13.600l7-4.200" stroke="#9db4cf" stroke-width="0.800"/><path d="M11.500 7.500L12.500 16.500" stroke="#8a9bb0" stroke-width="1"/><path d="M1.200 4.200l1.600 9.800" stroke="#58b058" stroke-width="1.600"/><path d="M21.600 1.400l2.200 9.600" stroke="#e06a3a" stroke-width="1.400"/></svg>
<div style="left:104px;top:1078px;width:40px;height:2px;background:#76b9ed;"></div>
<div style="left:149px;top:1078px;width:48px;height:2px;background:#76b9ed;"></div>
<div style="left:202px;top:1078px;width:40px;height:2px;background:#76b9ed;"></div>
<div style="left:251px;top:1078px;width:40px;height:2px;background:#76b9ed;"></div>
<span class="t" style="left:1873px;top:1043.64px;font-size:12px;line-height:14px;color:#ffffff;letter-spacing:-0.545px;">15:06</span>
<span class="t" style="left:1860px;top:1062.04px;font-size:12px;line-height:14px;color:#ffffff;letter-spacing:-0.605px;">24.09.2024</span>
</body></html>
